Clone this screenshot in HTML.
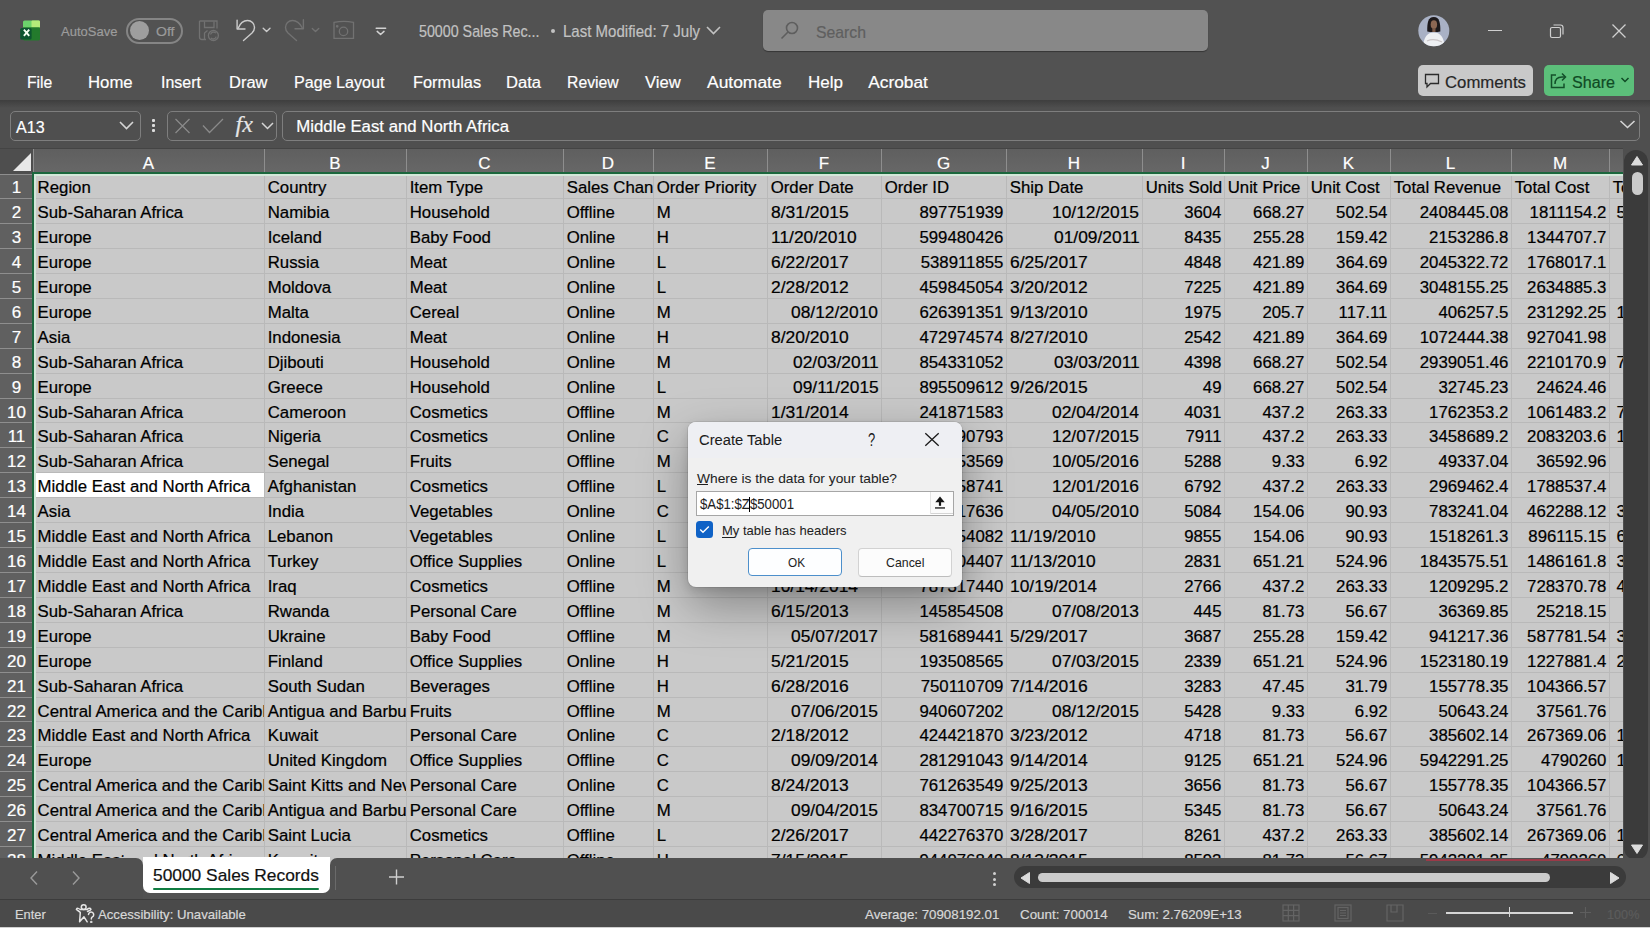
<!DOCTYPE html><html><head><meta charset="utf-8"><style>
html,body{margin:0;padding:0;width:1650px;height:928px;overflow:hidden;background:#525252}
body{position:relative;font-family:"Liberation Sans",sans-serif}
.t{position:absolute;white-space:nowrap;-webkit-text-stroke:0.2px currentColor}
.c .t{-webkit-text-stroke:0.22px #000}
</style></head><body>
<div style="position:absolute;left:0px;top:0px;width:1650px;height:100px;background:#525252"></div>
<div style="position:absolute;left:0px;top:100px;width:1650px;height:8px;background:linear-gradient(#3e3e3e,#4f4f4f)"></div>
<div style="position:absolute;left:0px;top:108px;width:1650px;height:41px;background:#4f4f4f"></div>
<div style="position:absolute;left:33px;top:174px;width:1590px;height:684px;background:#c9c9c9"></div>
<div style="position:absolute;left:35px;top:473px;width:229px;height:24px;background:#ffffff"></div>
<div style="position:absolute;left:264px;top:174px;width:1px;height:684px;background:#b9b9b9"></div>
<div style="position:absolute;left:406px;top:174px;width:1px;height:684px;background:#b9b9b9"></div>
<div style="position:absolute;left:563px;top:174px;width:1px;height:684px;background:#b9b9b9"></div>
<div style="position:absolute;left:653px;top:174px;width:1px;height:684px;background:#b9b9b9"></div>
<div style="position:absolute;left:767px;top:174px;width:1px;height:684px;background:#b9b9b9"></div>
<div style="position:absolute;left:881px;top:174px;width:1px;height:684px;background:#b9b9b9"></div>
<div style="position:absolute;left:1006px;top:174px;width:1px;height:684px;background:#b9b9b9"></div>
<div style="position:absolute;left:1142px;top:174px;width:1px;height:684px;background:#b9b9b9"></div>
<div style="position:absolute;left:1224px;top:174px;width:1px;height:684px;background:#b9b9b9"></div>
<div style="position:absolute;left:1307px;top:174px;width:1px;height:684px;background:#b9b9b9"></div>
<div style="position:absolute;left:1390px;top:174px;width:1px;height:684px;background:#b9b9b9"></div>
<div style="position:absolute;left:1511px;top:174px;width:1px;height:684px;background:#b9b9b9"></div>
<div style="position:absolute;left:1609px;top:174px;width:1px;height:684px;background:#b9b9b9"></div>
<div style="position:absolute;left:33px;top:198px;width:1590px;height:1px;background:#b9b9b9"></div>
<div style="position:absolute;left:33px;top:223px;width:1590px;height:1px;background:#b9b9b9"></div>
<div style="position:absolute;left:33px;top:248px;width:1590px;height:1px;background:#b9b9b9"></div>
<div style="position:absolute;left:33px;top:273px;width:1590px;height:1px;background:#b9b9b9"></div>
<div style="position:absolute;left:33px;top:298px;width:1590px;height:1px;background:#b9b9b9"></div>
<div style="position:absolute;left:33px;top:323px;width:1590px;height:1px;background:#b9b9b9"></div>
<div style="position:absolute;left:33px;top:348px;width:1590px;height:1px;background:#b9b9b9"></div>
<div style="position:absolute;left:33px;top:373px;width:1590px;height:1px;background:#b9b9b9"></div>
<div style="position:absolute;left:33px;top:398px;width:1590px;height:1px;background:#b9b9b9"></div>
<div style="position:absolute;left:33px;top:422px;width:1590px;height:1px;background:#b9b9b9"></div>
<div style="position:absolute;left:33px;top:447px;width:1590px;height:1px;background:#b9b9b9"></div>
<div style="position:absolute;left:33px;top:472px;width:1590px;height:1px;background:#b9b9b9"></div>
<div style="position:absolute;left:33px;top:497px;width:1590px;height:1px;background:#b9b9b9"></div>
<div style="position:absolute;left:33px;top:522px;width:1590px;height:1px;background:#b9b9b9"></div>
<div style="position:absolute;left:33px;top:547px;width:1590px;height:1px;background:#b9b9b9"></div>
<div style="position:absolute;left:33px;top:572px;width:1590px;height:1px;background:#b9b9b9"></div>
<div style="position:absolute;left:33px;top:597px;width:1590px;height:1px;background:#b9b9b9"></div>
<div style="position:absolute;left:33px;top:622px;width:1590px;height:1px;background:#b9b9b9"></div>
<div style="position:absolute;left:33px;top:647px;width:1590px;height:1px;background:#b9b9b9"></div>
<div style="position:absolute;left:33px;top:672px;width:1590px;height:1px;background:#b9b9b9"></div>
<div style="position:absolute;left:33px;top:697px;width:1590px;height:1px;background:#b9b9b9"></div>
<div style="position:absolute;left:33px;top:721px;width:1590px;height:1px;background:#b9b9b9"></div>
<div style="position:absolute;left:33px;top:746px;width:1590px;height:1px;background:#b9b9b9"></div>
<div style="position:absolute;left:33px;top:771px;width:1590px;height:1px;background:#b9b9b9"></div>
<div style="position:absolute;left:33px;top:796px;width:1590px;height:1px;background:#b9b9b9"></div>
<div style="position:absolute;left:33px;top:821px;width:1590px;height:1px;background:#b9b9b9"></div>
<div style="position:absolute;left:33px;top:846px;width:1590px;height:1px;background:#b9b9b9"></div>
<div class="c" style="position:absolute;left:34px;top:174px;width:230px;height:24px;overflow:hidden"><div class="t" style="left:3.60px;top:4.00px;font-size:16.80px;line-height:19px;color:#000;">Region</div></div>
<div class="c" style="position:absolute;left:265px;top:174px;width:141px;height:24px;overflow:hidden"><div class="t" style="left:2.70px;top:4.00px;font-size:16.80px;line-height:19px;color:#000;">Country</div></div>
<div class="c" style="position:absolute;left:407px;top:174px;width:156px;height:24px;overflow:hidden"><div class="t" style="left:2.70px;top:4.00px;font-size:16.80px;line-height:19px;color:#000;">Item Type</div></div>
<div class="c" style="position:absolute;left:564px;top:174px;width:89px;height:24px;overflow:hidden"><div class="t" style="left:2.70px;top:4.00px;font-size:16.80px;line-height:19px;color:#000;">Sales Channel</div></div>
<div class="c" style="position:absolute;left:654px;top:174px;width:113px;height:24px;overflow:hidden"><div class="t" style="left:2.70px;top:4.00px;font-size:16.80px;line-height:19px;color:#000;">Order Priority</div></div>
<div class="c" style="position:absolute;left:768px;top:174px;width:113px;height:24px;overflow:hidden"><div class="t" style="left:2.70px;top:4.00px;font-size:16.80px;line-height:19px;color:#000;">Order Date</div></div>
<div class="c" style="position:absolute;left:882px;top:174px;width:124px;height:24px;overflow:hidden"><div class="t" style="left:2.70px;top:4.00px;font-size:16.80px;line-height:19px;color:#000;">Order ID</div></div>
<div class="c" style="position:absolute;left:1007px;top:174px;width:135px;height:24px;overflow:hidden"><div class="t" style="left:2.70px;top:4.00px;font-size:16.80px;line-height:19px;color:#000;">Ship Date</div></div>
<div class="c" style="position:absolute;left:1143px;top:174px;width:81px;height:24px;overflow:hidden"><div class="t" style="left:2.70px;top:4.00px;font-size:16.80px;line-height:19px;color:#000;">Units Sold</div></div>
<div class="c" style="position:absolute;left:1225px;top:174px;width:82px;height:24px;overflow:hidden"><div class="t" style="left:2.70px;top:4.00px;font-size:16.80px;line-height:19px;color:#000;">Unit Price</div></div>
<div class="c" style="position:absolute;left:1308px;top:174px;width:82px;height:24px;overflow:hidden"><div class="t" style="left:2.70px;top:4.00px;font-size:16.80px;line-height:19px;color:#000;">Unit Cost</div></div>
<div class="c" style="position:absolute;left:1391px;top:174px;width:120px;height:24px;overflow:hidden"><div class="t" style="left:2.70px;top:4.00px;font-size:16.80px;line-height:19px;color:#000;">Total Revenue</div></div>
<div class="c" style="position:absolute;left:1512px;top:174px;width:97px;height:24px;overflow:hidden"><div class="t" style="left:2.70px;top:4.00px;font-size:16.80px;line-height:19px;color:#000;">Total Cost</div></div>
<div class="c" style="position:absolute;left:1610px;top:174px;width:13px;height:24px;overflow:hidden"><div class="t" style="left:2.70px;top:4.00px;font-size:16.80px;line-height:19px;color:#000;">Total Profit</div></div>
<div class="c" style="position:absolute;left:34px;top:199px;width:230px;height:24px;overflow:hidden"><div class="t" style="left:3.60px;top:4.00px;font-size:16.80px;line-height:19px;color:#000;">Sub-Saharan Africa</div></div>
<div class="c" style="position:absolute;left:265px;top:199px;width:141px;height:24px;overflow:hidden"><div class="t" style="left:2.70px;top:4.00px;font-size:16.80px;line-height:19px;color:#000;">Namibia</div></div>
<div class="c" style="position:absolute;left:407px;top:199px;width:156px;height:24px;overflow:hidden"><div class="t" style="left:2.70px;top:4.00px;font-size:16.80px;line-height:19px;color:#000;">Household</div></div>
<div class="c" style="position:absolute;left:564px;top:199px;width:89px;height:24px;overflow:hidden"><div class="t" style="left:2.70px;top:4.00px;font-size:16.80px;line-height:19px;color:#000;">Offline</div></div>
<div class="c" style="position:absolute;left:654px;top:199px;width:113px;height:24px;overflow:hidden"><div class="t" style="left:2.70px;top:4.00px;font-size:16.80px;line-height:19px;color:#000;">M</div></div>
<div class="c" style="position:absolute;left:768px;top:199px;width:113px;height:24px;overflow:hidden"><div class="t" style="left:2.70px;top:4.00px;font-size:16.80px;line-height:19px;color:#000;transform:scaleX(1.0401);transform-origin:0 0;">8/31/2015</div></div>
<div class="c" style="position:absolute;left:882px;top:199px;width:124px;height:24px;overflow:hidden"><div class="t" style="left:37.42px;top:4.00px;font-size:16.80px;line-height:19px;color:#000;">897751939</div></div>
<div class="c" style="position:absolute;left:1007px;top:199px;width:135px;height:24px;overflow:hidden"><div class="t" style="left:45.43px;top:4.00px;font-size:16.80px;line-height:19px;color:#000;transform:scaleX(1.0357);transform-origin:0 0;">10/12/2015</div></div>
<div class="c" style="position:absolute;left:1143px;top:199px;width:81px;height:24px;overflow:hidden"><div class="t" style="left:41.13px;top:4.00px;font-size:16.80px;line-height:19px;color:#000;">3604</div></div>
<div class="c" style="position:absolute;left:1225px;top:199px;width:82px;height:24px;overflow:hidden"><div class="t" style="left:28.12px;top:4.00px;font-size:16.80px;line-height:19px;color:#000;">668.27</div></div>
<div class="c" style="position:absolute;left:1308px;top:199px;width:82px;height:24px;overflow:hidden"><div class="t" style="left:28.12px;top:4.00px;font-size:16.80px;line-height:19px;color:#000;">502.54</div></div>
<div class="c" style="position:absolute;left:1391px;top:199px;width:120px;height:24px;overflow:hidden"><div class="t" style="left:28.75px;top:4.00px;font-size:16.80px;line-height:19px;color:#000;">2408445.08</div></div>
<div class="c" style="position:absolute;left:1512px;top:199px;width:97px;height:24px;overflow:hidden"><div class="t" style="left:17.59px;top:4.00px;font-size:16.80px;line-height:19px;color:#000;">1811154.2</div></div>
<div class="c" style="position:absolute;left:1610px;top:199px;width:13px;height:24px;overflow:hidden"><div class="t" style="left:6.50px;top:4.00px;font-size:16.80px;line-height:19px;color:#000;">5</div></div>
<div class="c" style="position:absolute;left:34px;top:224px;width:230px;height:24px;overflow:hidden"><div class="t" style="left:3.60px;top:4.00px;font-size:16.80px;line-height:19px;color:#000;">Europe</div></div>
<div class="c" style="position:absolute;left:265px;top:224px;width:141px;height:24px;overflow:hidden"><div class="t" style="left:2.70px;top:4.00px;font-size:16.80px;line-height:19px;color:#000;">Iceland</div></div>
<div class="c" style="position:absolute;left:407px;top:224px;width:156px;height:24px;overflow:hidden"><div class="t" style="left:2.70px;top:4.00px;font-size:16.80px;line-height:19px;color:#000;">Baby Food</div></div>
<div class="c" style="position:absolute;left:564px;top:224px;width:89px;height:24px;overflow:hidden"><div class="t" style="left:2.70px;top:4.00px;font-size:16.80px;line-height:19px;color:#000;">Online</div></div>
<div class="c" style="position:absolute;left:654px;top:224px;width:113px;height:24px;overflow:hidden"><div class="t" style="left:2.70px;top:4.00px;font-size:16.80px;line-height:19px;color:#000;">H</div></div>
<div class="c" style="position:absolute;left:768px;top:224px;width:113px;height:24px;overflow:hidden"><div class="t" style="left:2.70px;top:4.00px;font-size:16.80px;line-height:19px;color:#000;transform:scaleX(1.0362);transform-origin:0 0;">11/20/2010</div></div>
<div class="c" style="position:absolute;left:882px;top:224px;width:124px;height:24px;overflow:hidden"><div class="t" style="left:37.42px;top:4.00px;font-size:16.80px;line-height:19px;color:#000;">599480426</div></div>
<div class="c" style="position:absolute;left:1007px;top:224px;width:135px;height:24px;overflow:hidden"><div class="t" style="left:46.67px;top:4.00px;font-size:16.80px;line-height:19px;color:#000;transform:scaleX(1.0362);transform-origin:0 0;">01/09/2011</div></div>
<div class="c" style="position:absolute;left:1143px;top:224px;width:81px;height:24px;overflow:hidden"><div class="t" style="left:41.13px;top:4.00px;font-size:16.80px;line-height:19px;color:#000;">8435</div></div>
<div class="c" style="position:absolute;left:1225px;top:224px;width:82px;height:24px;overflow:hidden"><div class="t" style="left:28.12px;top:4.00px;font-size:16.80px;line-height:19px;color:#000;">255.28</div></div>
<div class="c" style="position:absolute;left:1308px;top:224px;width:82px;height:24px;overflow:hidden"><div class="t" style="left:28.12px;top:4.00px;font-size:16.80px;line-height:19px;color:#000;">159.42</div></div>
<div class="c" style="position:absolute;left:1391px;top:224px;width:120px;height:24px;overflow:hidden"><div class="t" style="left:38.09px;top:4.00px;font-size:16.80px;line-height:19px;color:#000;">2153286.8</div></div>
<div class="c" style="position:absolute;left:1512px;top:224px;width:97px;height:24px;overflow:hidden"><div class="t" style="left:15.09px;top:4.00px;font-size:16.80px;line-height:19px;color:#000;">1344707.7</div></div>
<div class="c" style="position:absolute;left:34px;top:249px;width:230px;height:24px;overflow:hidden"><div class="t" style="left:3.60px;top:4.00px;font-size:16.80px;line-height:19px;color:#000;">Europe</div></div>
<div class="c" style="position:absolute;left:265px;top:249px;width:141px;height:24px;overflow:hidden"><div class="t" style="left:2.70px;top:4.00px;font-size:16.80px;line-height:19px;color:#000;">Russia</div></div>
<div class="c" style="position:absolute;left:407px;top:249px;width:156px;height:24px;overflow:hidden"><div class="t" style="left:2.70px;top:4.00px;font-size:16.80px;line-height:19px;color:#000;">Meat</div></div>
<div class="c" style="position:absolute;left:564px;top:249px;width:89px;height:24px;overflow:hidden"><div class="t" style="left:2.70px;top:4.00px;font-size:16.80px;line-height:19px;color:#000;">Online</div></div>
<div class="c" style="position:absolute;left:654px;top:249px;width:113px;height:24px;overflow:hidden"><div class="t" style="left:2.70px;top:4.00px;font-size:16.80px;line-height:19px;color:#000;">L</div></div>
<div class="c" style="position:absolute;left:768px;top:249px;width:113px;height:24px;overflow:hidden"><div class="t" style="left:2.70px;top:4.00px;font-size:16.80px;line-height:19px;color:#000;transform:scaleX(1.0401);transform-origin:0 0;">6/22/2017</div></div>
<div class="c" style="position:absolute;left:882px;top:249px;width:124px;height:24px;overflow:hidden"><div class="t" style="left:38.67px;top:4.00px;font-size:16.80px;line-height:19px;color:#000;">538911855</div></div>
<div class="c" style="position:absolute;left:1007px;top:249px;width:135px;height:24px;overflow:hidden"><div class="t" style="left:2.70px;top:4.00px;font-size:16.80px;line-height:19px;color:#000;transform:scaleX(1.0401);transform-origin:0 0;">6/25/2017</div></div>
<div class="c" style="position:absolute;left:1143px;top:249px;width:81px;height:24px;overflow:hidden"><div class="t" style="left:41.13px;top:4.00px;font-size:16.80px;line-height:19px;color:#000;">4848</div></div>
<div class="c" style="position:absolute;left:1225px;top:249px;width:82px;height:24px;overflow:hidden"><div class="t" style="left:28.12px;top:4.00px;font-size:16.80px;line-height:19px;color:#000;">421.89</div></div>
<div class="c" style="position:absolute;left:1308px;top:249px;width:82px;height:24px;overflow:hidden"><div class="t" style="left:28.12px;top:4.00px;font-size:16.80px;line-height:19px;color:#000;">364.69</div></div>
<div class="c" style="position:absolute;left:1391px;top:249px;width:120px;height:24px;overflow:hidden"><div class="t" style="left:28.75px;top:4.00px;font-size:16.80px;line-height:19px;color:#000;">2045322.72</div></div>
<div class="c" style="position:absolute;left:1512px;top:249px;width:97px;height:24px;overflow:hidden"><div class="t" style="left:15.09px;top:4.00px;font-size:16.80px;line-height:19px;color:#000;">1768017.1</div></div>
<div class="c" style="position:absolute;left:34px;top:274px;width:230px;height:24px;overflow:hidden"><div class="t" style="left:3.60px;top:4.00px;font-size:16.80px;line-height:19px;color:#000;">Europe</div></div>
<div class="c" style="position:absolute;left:265px;top:274px;width:141px;height:24px;overflow:hidden"><div class="t" style="left:2.70px;top:4.00px;font-size:16.80px;line-height:19px;color:#000;">Moldova</div></div>
<div class="c" style="position:absolute;left:407px;top:274px;width:156px;height:24px;overflow:hidden"><div class="t" style="left:2.70px;top:4.00px;font-size:16.80px;line-height:19px;color:#000;">Meat</div></div>
<div class="c" style="position:absolute;left:564px;top:274px;width:89px;height:24px;overflow:hidden"><div class="t" style="left:2.70px;top:4.00px;font-size:16.80px;line-height:19px;color:#000;">Online</div></div>
<div class="c" style="position:absolute;left:654px;top:274px;width:113px;height:24px;overflow:hidden"><div class="t" style="left:2.70px;top:4.00px;font-size:16.80px;line-height:19px;color:#000;">L</div></div>
<div class="c" style="position:absolute;left:768px;top:274px;width:113px;height:24px;overflow:hidden"><div class="t" style="left:2.70px;top:4.00px;font-size:16.80px;line-height:19px;color:#000;transform:scaleX(1.0401);transform-origin:0 0;">2/28/2012</div></div>
<div class="c" style="position:absolute;left:882px;top:274px;width:124px;height:24px;overflow:hidden"><div class="t" style="left:37.42px;top:4.00px;font-size:16.80px;line-height:19px;color:#000;">459845054</div></div>
<div class="c" style="position:absolute;left:1007px;top:274px;width:135px;height:24px;overflow:hidden"><div class="t" style="left:2.70px;top:4.00px;font-size:16.80px;line-height:19px;color:#000;transform:scaleX(1.0401);transform-origin:0 0;">3/20/2012</div></div>
<div class="c" style="position:absolute;left:1143px;top:274px;width:81px;height:24px;overflow:hidden"><div class="t" style="left:41.13px;top:4.00px;font-size:16.80px;line-height:19px;color:#000;">7225</div></div>
<div class="c" style="position:absolute;left:1225px;top:274px;width:82px;height:24px;overflow:hidden"><div class="t" style="left:28.12px;top:4.00px;font-size:16.80px;line-height:19px;color:#000;">421.89</div></div>
<div class="c" style="position:absolute;left:1308px;top:274px;width:82px;height:24px;overflow:hidden"><div class="t" style="left:28.12px;top:4.00px;font-size:16.80px;line-height:19px;color:#000;">364.69</div></div>
<div class="c" style="position:absolute;left:1391px;top:274px;width:120px;height:24px;overflow:hidden"><div class="t" style="left:28.75px;top:4.00px;font-size:16.80px;line-height:19px;color:#000;">3048155.25</div></div>
<div class="c" style="position:absolute;left:1512px;top:274px;width:97px;height:24px;overflow:hidden"><div class="t" style="left:15.09px;top:4.00px;font-size:16.80px;line-height:19px;color:#000;">2634885.3</div></div>
<div class="c" style="position:absolute;left:34px;top:299px;width:230px;height:24px;overflow:hidden"><div class="t" style="left:3.60px;top:4.00px;font-size:16.80px;line-height:19px;color:#000;">Europe</div></div>
<div class="c" style="position:absolute;left:265px;top:299px;width:141px;height:24px;overflow:hidden"><div class="t" style="left:2.70px;top:4.00px;font-size:16.80px;line-height:19px;color:#000;">Malta</div></div>
<div class="c" style="position:absolute;left:407px;top:299px;width:156px;height:24px;overflow:hidden"><div class="t" style="left:2.70px;top:4.00px;font-size:16.80px;line-height:19px;color:#000;">Cereal</div></div>
<div class="c" style="position:absolute;left:564px;top:299px;width:89px;height:24px;overflow:hidden"><div class="t" style="left:2.70px;top:4.00px;font-size:16.80px;line-height:19px;color:#000;">Online</div></div>
<div class="c" style="position:absolute;left:654px;top:299px;width:113px;height:24px;overflow:hidden"><div class="t" style="left:2.70px;top:4.00px;font-size:16.80px;line-height:19px;color:#000;">M</div></div>
<div class="c" style="position:absolute;left:768px;top:299px;width:113px;height:24px;overflow:hidden"><div class="t" style="left:23.43px;top:4.00px;font-size:16.80px;line-height:19px;color:#000;transform:scaleX(1.0357);transform-origin:0 0;">08/12/2010</div></div>
<div class="c" style="position:absolute;left:882px;top:299px;width:124px;height:24px;overflow:hidden"><div class="t" style="left:37.42px;top:4.00px;font-size:16.80px;line-height:19px;color:#000;">626391351</div></div>
<div class="c" style="position:absolute;left:1007px;top:299px;width:135px;height:24px;overflow:hidden"><div class="t" style="left:2.70px;top:4.00px;font-size:16.80px;line-height:19px;color:#000;transform:scaleX(1.0401);transform-origin:0 0;">9/13/2010</div></div>
<div class="c" style="position:absolute;left:1143px;top:299px;width:81px;height:24px;overflow:hidden"><div class="t" style="left:41.13px;top:4.00px;font-size:16.80px;line-height:19px;color:#000;">1975</div></div>
<div class="c" style="position:absolute;left:1225px;top:299px;width:82px;height:24px;overflow:hidden"><div class="t" style="left:37.46px;top:4.00px;font-size:16.80px;line-height:19px;color:#000;">205.7</div></div>
<div class="c" style="position:absolute;left:1308px;top:299px;width:82px;height:24px;overflow:hidden"><div class="t" style="left:30.61px;top:4.00px;font-size:16.80px;line-height:19px;color:#000;">117.11</div></div>
<div class="c" style="position:absolute;left:1391px;top:299px;width:120px;height:24px;overflow:hidden"><div class="t" style="left:47.44px;top:4.00px;font-size:16.80px;line-height:19px;color:#000;">406257.5</div></div>
<div class="c" style="position:absolute;left:1512px;top:299px;width:97px;height:24px;overflow:hidden"><div class="t" style="left:15.09px;top:4.00px;font-size:16.80px;line-height:19px;color:#000;">231292.25</div></div>
<div class="c" style="position:absolute;left:1610px;top:299px;width:13px;height:24px;overflow:hidden"><div class="t" style="left:6.50px;top:4.00px;font-size:16.80px;line-height:19px;color:#000;">1</div></div>
<div class="c" style="position:absolute;left:34px;top:324px;width:230px;height:24px;overflow:hidden"><div class="t" style="left:3.60px;top:4.00px;font-size:16.80px;line-height:19px;color:#000;">Asia</div></div>
<div class="c" style="position:absolute;left:265px;top:324px;width:141px;height:24px;overflow:hidden"><div class="t" style="left:2.70px;top:4.00px;font-size:16.80px;line-height:19px;color:#000;">Indonesia</div></div>
<div class="c" style="position:absolute;left:407px;top:324px;width:156px;height:24px;overflow:hidden"><div class="t" style="left:2.70px;top:4.00px;font-size:16.80px;line-height:19px;color:#000;">Meat</div></div>
<div class="c" style="position:absolute;left:564px;top:324px;width:89px;height:24px;overflow:hidden"><div class="t" style="left:2.70px;top:4.00px;font-size:16.80px;line-height:19px;color:#000;">Online</div></div>
<div class="c" style="position:absolute;left:654px;top:324px;width:113px;height:24px;overflow:hidden"><div class="t" style="left:2.70px;top:4.00px;font-size:16.80px;line-height:19px;color:#000;">H</div></div>
<div class="c" style="position:absolute;left:768px;top:324px;width:113px;height:24px;overflow:hidden"><div class="t" style="left:2.70px;top:4.00px;font-size:16.80px;line-height:19px;color:#000;transform:scaleX(1.0401);transform-origin:0 0;">8/20/2010</div></div>
<div class="c" style="position:absolute;left:882px;top:324px;width:124px;height:24px;overflow:hidden"><div class="t" style="left:37.42px;top:4.00px;font-size:16.80px;line-height:19px;color:#000;">472974574</div></div>
<div class="c" style="position:absolute;left:1007px;top:324px;width:135px;height:24px;overflow:hidden"><div class="t" style="left:2.70px;top:4.00px;font-size:16.80px;line-height:19px;color:#000;transform:scaleX(1.0401);transform-origin:0 0;">8/27/2010</div></div>
<div class="c" style="position:absolute;left:1143px;top:324px;width:81px;height:24px;overflow:hidden"><div class="t" style="left:41.13px;top:4.00px;font-size:16.80px;line-height:19px;color:#000;">2542</div></div>
<div class="c" style="position:absolute;left:1225px;top:324px;width:82px;height:24px;overflow:hidden"><div class="t" style="left:28.12px;top:4.00px;font-size:16.80px;line-height:19px;color:#000;">421.89</div></div>
<div class="c" style="position:absolute;left:1308px;top:324px;width:82px;height:24px;overflow:hidden"><div class="t" style="left:28.12px;top:4.00px;font-size:16.80px;line-height:19px;color:#000;">364.69</div></div>
<div class="c" style="position:absolute;left:1391px;top:324px;width:120px;height:24px;overflow:hidden"><div class="t" style="left:28.75px;top:4.00px;font-size:16.80px;line-height:19px;color:#000;">1072444.38</div></div>
<div class="c" style="position:absolute;left:1512px;top:324px;width:97px;height:24px;overflow:hidden"><div class="t" style="left:15.09px;top:4.00px;font-size:16.80px;line-height:19px;color:#000;">927041.98</div></div>
<div class="c" style="position:absolute;left:34px;top:349px;width:230px;height:24px;overflow:hidden"><div class="t" style="left:3.60px;top:4.00px;font-size:16.80px;line-height:19px;color:#000;">Sub-Saharan Africa</div></div>
<div class="c" style="position:absolute;left:265px;top:349px;width:141px;height:24px;overflow:hidden"><div class="t" style="left:2.70px;top:4.00px;font-size:16.80px;line-height:19px;color:#000;">Djibouti</div></div>
<div class="c" style="position:absolute;left:407px;top:349px;width:156px;height:24px;overflow:hidden"><div class="t" style="left:2.70px;top:4.00px;font-size:16.80px;line-height:19px;color:#000;">Household</div></div>
<div class="c" style="position:absolute;left:564px;top:349px;width:89px;height:24px;overflow:hidden"><div class="t" style="left:2.70px;top:4.00px;font-size:16.80px;line-height:19px;color:#000;">Online</div></div>
<div class="c" style="position:absolute;left:654px;top:349px;width:113px;height:24px;overflow:hidden"><div class="t" style="left:2.70px;top:4.00px;font-size:16.80px;line-height:19px;color:#000;">M</div></div>
<div class="c" style="position:absolute;left:768px;top:349px;width:113px;height:24px;overflow:hidden"><div class="t" style="left:24.67px;top:4.00px;font-size:16.80px;line-height:19px;color:#000;transform:scaleX(1.0362);transform-origin:0 0;">02/03/2011</div></div>
<div class="c" style="position:absolute;left:882px;top:349px;width:124px;height:24px;overflow:hidden"><div class="t" style="left:37.42px;top:4.00px;font-size:16.80px;line-height:19px;color:#000;">854331052</div></div>
<div class="c" style="position:absolute;left:1007px;top:349px;width:135px;height:24px;overflow:hidden"><div class="t" style="left:46.67px;top:4.00px;font-size:16.80px;line-height:19px;color:#000;transform:scaleX(1.0362);transform-origin:0 0;">03/03/2011</div></div>
<div class="c" style="position:absolute;left:1143px;top:349px;width:81px;height:24px;overflow:hidden"><div class="t" style="left:41.13px;top:4.00px;font-size:16.80px;line-height:19px;color:#000;">4398</div></div>
<div class="c" style="position:absolute;left:1225px;top:349px;width:82px;height:24px;overflow:hidden"><div class="t" style="left:28.12px;top:4.00px;font-size:16.80px;line-height:19px;color:#000;">668.27</div></div>
<div class="c" style="position:absolute;left:1308px;top:349px;width:82px;height:24px;overflow:hidden"><div class="t" style="left:28.12px;top:4.00px;font-size:16.80px;line-height:19px;color:#000;">502.54</div></div>
<div class="c" style="position:absolute;left:1391px;top:349px;width:120px;height:24px;overflow:hidden"><div class="t" style="left:28.75px;top:4.00px;font-size:16.80px;line-height:19px;color:#000;">2939051.46</div></div>
<div class="c" style="position:absolute;left:1512px;top:349px;width:97px;height:24px;overflow:hidden"><div class="t" style="left:15.09px;top:4.00px;font-size:16.80px;line-height:19px;color:#000;">2210170.9</div></div>
<div class="c" style="position:absolute;left:1610px;top:349px;width:13px;height:24px;overflow:hidden"><div class="t" style="left:6.50px;top:4.00px;font-size:16.80px;line-height:19px;color:#000;">7</div></div>
<div class="c" style="position:absolute;left:34px;top:374px;width:230px;height:24px;overflow:hidden"><div class="t" style="left:3.60px;top:4.00px;font-size:16.80px;line-height:19px;color:#000;">Europe</div></div>
<div class="c" style="position:absolute;left:265px;top:374px;width:141px;height:24px;overflow:hidden"><div class="t" style="left:2.70px;top:4.00px;font-size:16.80px;line-height:19px;color:#000;">Greece</div></div>
<div class="c" style="position:absolute;left:407px;top:374px;width:156px;height:24px;overflow:hidden"><div class="t" style="left:2.70px;top:4.00px;font-size:16.80px;line-height:19px;color:#000;">Household</div></div>
<div class="c" style="position:absolute;left:564px;top:374px;width:89px;height:24px;overflow:hidden"><div class="t" style="left:2.70px;top:4.00px;font-size:16.80px;line-height:19px;color:#000;">Online</div></div>
<div class="c" style="position:absolute;left:654px;top:374px;width:113px;height:24px;overflow:hidden"><div class="t" style="left:2.70px;top:4.00px;font-size:16.80px;line-height:19px;color:#000;">L</div></div>
<div class="c" style="position:absolute;left:768px;top:374px;width:113px;height:24px;overflow:hidden"><div class="t" style="left:24.67px;top:4.00px;font-size:16.80px;line-height:19px;color:#000;transform:scaleX(1.0362);transform-origin:0 0;">09/11/2015</div></div>
<div class="c" style="position:absolute;left:882px;top:374px;width:124px;height:24px;overflow:hidden"><div class="t" style="left:37.42px;top:4.00px;font-size:16.80px;line-height:19px;color:#000;">895509612</div></div>
<div class="c" style="position:absolute;left:1007px;top:374px;width:135px;height:24px;overflow:hidden"><div class="t" style="left:2.70px;top:4.00px;font-size:16.80px;line-height:19px;color:#000;transform:scaleX(1.0401);transform-origin:0 0;">9/26/2015</div></div>
<div class="c" style="position:absolute;left:1143px;top:374px;width:81px;height:24px;overflow:hidden"><div class="t" style="left:59.82px;top:4.00px;font-size:16.80px;line-height:19px;color:#000;">49</div></div>
<div class="c" style="position:absolute;left:1225px;top:374px;width:82px;height:24px;overflow:hidden"><div class="t" style="left:28.12px;top:4.00px;font-size:16.80px;line-height:19px;color:#000;">668.27</div></div>
<div class="c" style="position:absolute;left:1308px;top:374px;width:82px;height:24px;overflow:hidden"><div class="t" style="left:28.12px;top:4.00px;font-size:16.80px;line-height:19px;color:#000;">502.54</div></div>
<div class="c" style="position:absolute;left:1391px;top:374px;width:120px;height:24px;overflow:hidden"><div class="t" style="left:47.44px;top:4.00px;font-size:16.80px;line-height:19px;color:#000;">32745.23</div></div>
<div class="c" style="position:absolute;left:1512px;top:374px;width:97px;height:24px;overflow:hidden"><div class="t" style="left:24.44px;top:4.00px;font-size:16.80px;line-height:19px;color:#000;">24624.46</div></div>
<div class="c" style="position:absolute;left:34px;top:399px;width:230px;height:23px;overflow:hidden"><div class="t" style="left:3.60px;top:4.00px;font-size:16.80px;line-height:19px;color:#000;">Sub-Saharan Africa</div></div>
<div class="c" style="position:absolute;left:265px;top:399px;width:141px;height:23px;overflow:hidden"><div class="t" style="left:2.70px;top:4.00px;font-size:16.80px;line-height:19px;color:#000;">Cameroon</div></div>
<div class="c" style="position:absolute;left:407px;top:399px;width:156px;height:23px;overflow:hidden"><div class="t" style="left:2.70px;top:4.00px;font-size:16.80px;line-height:19px;color:#000;">Cosmetics</div></div>
<div class="c" style="position:absolute;left:564px;top:399px;width:89px;height:23px;overflow:hidden"><div class="t" style="left:2.70px;top:4.00px;font-size:16.80px;line-height:19px;color:#000;">Offline</div></div>
<div class="c" style="position:absolute;left:654px;top:399px;width:113px;height:23px;overflow:hidden"><div class="t" style="left:2.70px;top:4.00px;font-size:16.80px;line-height:19px;color:#000;">M</div></div>
<div class="c" style="position:absolute;left:768px;top:399px;width:113px;height:23px;overflow:hidden"><div class="t" style="left:2.70px;top:4.00px;font-size:16.80px;line-height:19px;color:#000;transform:scaleX(1.0401);transform-origin:0 0;">1/31/2014</div></div>
<div class="c" style="position:absolute;left:882px;top:399px;width:124px;height:23px;overflow:hidden"><div class="t" style="left:37.42px;top:4.00px;font-size:16.80px;line-height:19px;color:#000;">241871583</div></div>
<div class="c" style="position:absolute;left:1007px;top:399px;width:135px;height:23px;overflow:hidden"><div class="t" style="left:45.43px;top:4.00px;font-size:16.80px;line-height:19px;color:#000;transform:scaleX(1.0357);transform-origin:0 0;">02/04/2014</div></div>
<div class="c" style="position:absolute;left:1143px;top:399px;width:81px;height:23px;overflow:hidden"><div class="t" style="left:41.13px;top:4.00px;font-size:16.80px;line-height:19px;color:#000;">4031</div></div>
<div class="c" style="position:absolute;left:1225px;top:399px;width:82px;height:23px;overflow:hidden"><div class="t" style="left:37.46px;top:4.00px;font-size:16.80px;line-height:19px;color:#000;">437.2</div></div>
<div class="c" style="position:absolute;left:1308px;top:399px;width:82px;height:23px;overflow:hidden"><div class="t" style="left:28.12px;top:4.00px;font-size:16.80px;line-height:19px;color:#000;">263.33</div></div>
<div class="c" style="position:absolute;left:1391px;top:399px;width:120px;height:23px;overflow:hidden"><div class="t" style="left:38.09px;top:4.00px;font-size:16.80px;line-height:19px;color:#000;">1762353.2</div></div>
<div class="c" style="position:absolute;left:1512px;top:399px;width:97px;height:23px;overflow:hidden"><div class="t" style="left:15.09px;top:4.00px;font-size:16.80px;line-height:19px;color:#000;">1061483.2</div></div>
<div class="c" style="position:absolute;left:1610px;top:399px;width:13px;height:23px;overflow:hidden"><div class="t" style="left:6.50px;top:4.00px;font-size:16.80px;line-height:19px;color:#000;">7</div></div>
<div class="c" style="position:absolute;left:34px;top:423px;width:230px;height:24px;overflow:hidden"><div class="t" style="left:3.60px;top:4.00px;font-size:16.80px;line-height:19px;color:#000;">Sub-Saharan Africa</div></div>
<div class="c" style="position:absolute;left:265px;top:423px;width:141px;height:24px;overflow:hidden"><div class="t" style="left:2.70px;top:4.00px;font-size:16.80px;line-height:19px;color:#000;">Nigeria</div></div>
<div class="c" style="position:absolute;left:407px;top:423px;width:156px;height:24px;overflow:hidden"><div class="t" style="left:2.70px;top:4.00px;font-size:16.80px;line-height:19px;color:#000;">Cosmetics</div></div>
<div class="c" style="position:absolute;left:564px;top:423px;width:89px;height:24px;overflow:hidden"><div class="t" style="left:2.70px;top:4.00px;font-size:16.80px;line-height:19px;color:#000;">Online</div></div>
<div class="c" style="position:absolute;left:654px;top:423px;width:113px;height:24px;overflow:hidden"><div class="t" style="left:2.70px;top:4.00px;font-size:16.80px;line-height:19px;color:#000;">C</div></div>
<div class="c" style="position:absolute;left:768px;top:423px;width:113px;height:24px;overflow:hidden"><div class="t" style="left:2.70px;top:4.00px;font-size:16.80px;line-height:19px;color:#000;transform:scaleX(1.0362);transform-origin:0 0;">11/26/2015</div></div>
<div class="c" style="position:absolute;left:882px;top:423px;width:124px;height:24px;overflow:hidden"><div class="t" style="left:37.42px;top:4.00px;font-size:16.80px;line-height:19px;color:#000;">423690793</div></div>
<div class="c" style="position:absolute;left:1007px;top:423px;width:135px;height:24px;overflow:hidden"><div class="t" style="left:45.43px;top:4.00px;font-size:16.80px;line-height:19px;color:#000;transform:scaleX(1.0357);transform-origin:0 0;">12/07/2015</div></div>
<div class="c" style="position:absolute;left:1143px;top:423px;width:81px;height:24px;overflow:hidden"><div class="t" style="left:42.38px;top:4.00px;font-size:16.80px;line-height:19px;color:#000;">7911</div></div>
<div class="c" style="position:absolute;left:1225px;top:423px;width:82px;height:24px;overflow:hidden"><div class="t" style="left:37.46px;top:4.00px;font-size:16.80px;line-height:19px;color:#000;">437.2</div></div>
<div class="c" style="position:absolute;left:1308px;top:423px;width:82px;height:24px;overflow:hidden"><div class="t" style="left:28.12px;top:4.00px;font-size:16.80px;line-height:19px;color:#000;">263.33</div></div>
<div class="c" style="position:absolute;left:1391px;top:423px;width:120px;height:24px;overflow:hidden"><div class="t" style="left:38.09px;top:4.00px;font-size:16.80px;line-height:19px;color:#000;">3458689.2</div></div>
<div class="c" style="position:absolute;left:1512px;top:423px;width:97px;height:24px;overflow:hidden"><div class="t" style="left:15.09px;top:4.00px;font-size:16.80px;line-height:19px;color:#000;">2083203.6</div></div>
<div class="c" style="position:absolute;left:1610px;top:423px;width:13px;height:24px;overflow:hidden"><div class="t" style="left:6.50px;top:4.00px;font-size:16.80px;line-height:19px;color:#000;">1</div></div>
<div class="c" style="position:absolute;left:34px;top:448px;width:230px;height:24px;overflow:hidden"><div class="t" style="left:3.60px;top:4.00px;font-size:16.80px;line-height:19px;color:#000;">Sub-Saharan Africa</div></div>
<div class="c" style="position:absolute;left:265px;top:448px;width:141px;height:24px;overflow:hidden"><div class="t" style="left:2.70px;top:4.00px;font-size:16.80px;line-height:19px;color:#000;">Senegal</div></div>
<div class="c" style="position:absolute;left:407px;top:448px;width:156px;height:24px;overflow:hidden"><div class="t" style="left:2.70px;top:4.00px;font-size:16.80px;line-height:19px;color:#000;">Fruits</div></div>
<div class="c" style="position:absolute;left:564px;top:448px;width:89px;height:24px;overflow:hidden"><div class="t" style="left:2.70px;top:4.00px;font-size:16.80px;line-height:19px;color:#000;">Offline</div></div>
<div class="c" style="position:absolute;left:654px;top:448px;width:113px;height:24px;overflow:hidden"><div class="t" style="left:2.70px;top:4.00px;font-size:16.80px;line-height:19px;color:#000;">M</div></div>
<div class="c" style="position:absolute;left:768px;top:448px;width:113px;height:24px;overflow:hidden"><div class="t" style="left:2.70px;top:4.00px;font-size:16.80px;line-height:19px;color:#000;transform:scaleX(1.0401);transform-origin:0 0;">9/16/2016</div></div>
<div class="c" style="position:absolute;left:882px;top:448px;width:124px;height:24px;overflow:hidden"><div class="t" style="left:37.42px;top:4.00px;font-size:16.80px;line-height:19px;color:#000;">176353569</div></div>
<div class="c" style="position:absolute;left:1007px;top:448px;width:135px;height:24px;overflow:hidden"><div class="t" style="left:45.43px;top:4.00px;font-size:16.80px;line-height:19px;color:#000;transform:scaleX(1.0357);transform-origin:0 0;">10/05/2016</div></div>
<div class="c" style="position:absolute;left:1143px;top:448px;width:81px;height:24px;overflow:hidden"><div class="t" style="left:41.13px;top:4.00px;font-size:16.80px;line-height:19px;color:#000;">5288</div></div>
<div class="c" style="position:absolute;left:1225px;top:448px;width:82px;height:24px;overflow:hidden"><div class="t" style="left:46.81px;top:4.00px;font-size:16.80px;line-height:19px;color:#000;">9.33</div></div>
<div class="c" style="position:absolute;left:1308px;top:448px;width:82px;height:24px;overflow:hidden"><div class="t" style="left:46.81px;top:4.00px;font-size:16.80px;line-height:19px;color:#000;">6.92</div></div>
<div class="c" style="position:absolute;left:1391px;top:448px;width:120px;height:24px;overflow:hidden"><div class="t" style="left:47.44px;top:4.00px;font-size:16.80px;line-height:19px;color:#000;">49337.04</div></div>
<div class="c" style="position:absolute;left:1512px;top:448px;width:97px;height:24px;overflow:hidden"><div class="t" style="left:24.44px;top:4.00px;font-size:16.80px;line-height:19px;color:#000;">36592.96</div></div>
<div class="c" style="position:absolute;left:34px;top:473px;width:230px;height:24px;overflow:hidden"><div class="t" style="left:3.60px;top:4.00px;font-size:16.80px;line-height:19px;color:#000;">Middle East and North Africa</div></div>
<div class="c" style="position:absolute;left:265px;top:473px;width:141px;height:24px;overflow:hidden"><div class="t" style="left:2.70px;top:4.00px;font-size:16.80px;line-height:19px;color:#000;">Afghanistan</div></div>
<div class="c" style="position:absolute;left:407px;top:473px;width:156px;height:24px;overflow:hidden"><div class="t" style="left:2.70px;top:4.00px;font-size:16.80px;line-height:19px;color:#000;">Cosmetics</div></div>
<div class="c" style="position:absolute;left:564px;top:473px;width:89px;height:24px;overflow:hidden"><div class="t" style="left:2.70px;top:4.00px;font-size:16.80px;line-height:19px;color:#000;">Offline</div></div>
<div class="c" style="position:absolute;left:654px;top:473px;width:113px;height:24px;overflow:hidden"><div class="t" style="left:2.70px;top:4.00px;font-size:16.80px;line-height:19px;color:#000;">L</div></div>
<div class="c" style="position:absolute;left:768px;top:473px;width:113px;height:24px;overflow:hidden"><div class="t" style="left:2.70px;top:4.00px;font-size:16.80px;line-height:19px;color:#000;transform:scaleX(1.0362);transform-origin:0 0;">11/15/2016</div></div>
<div class="c" style="position:absolute;left:882px;top:473px;width:124px;height:24px;overflow:hidden"><div class="t" style="left:37.42px;top:4.00px;font-size:16.80px;line-height:19px;color:#000;">645358741</div></div>
<div class="c" style="position:absolute;left:1007px;top:473px;width:135px;height:24px;overflow:hidden"><div class="t" style="left:45.43px;top:4.00px;font-size:16.80px;line-height:19px;color:#000;transform:scaleX(1.0357);transform-origin:0 0;">12/01/2016</div></div>
<div class="c" style="position:absolute;left:1143px;top:473px;width:81px;height:24px;overflow:hidden"><div class="t" style="left:41.13px;top:4.00px;font-size:16.80px;line-height:19px;color:#000;">6792</div></div>
<div class="c" style="position:absolute;left:1225px;top:473px;width:82px;height:24px;overflow:hidden"><div class="t" style="left:37.46px;top:4.00px;font-size:16.80px;line-height:19px;color:#000;">437.2</div></div>
<div class="c" style="position:absolute;left:1308px;top:473px;width:82px;height:24px;overflow:hidden"><div class="t" style="left:28.12px;top:4.00px;font-size:16.80px;line-height:19px;color:#000;">263.33</div></div>
<div class="c" style="position:absolute;left:1391px;top:473px;width:120px;height:24px;overflow:hidden"><div class="t" style="left:38.09px;top:4.00px;font-size:16.80px;line-height:19px;color:#000;">2969462.4</div></div>
<div class="c" style="position:absolute;left:1512px;top:473px;width:97px;height:24px;overflow:hidden"><div class="t" style="left:15.09px;top:4.00px;font-size:16.80px;line-height:19px;color:#000;">1788537.4</div></div>
<div class="c" style="position:absolute;left:34px;top:498px;width:230px;height:24px;overflow:hidden"><div class="t" style="left:3.60px;top:4.00px;font-size:16.80px;line-height:19px;color:#000;">Asia</div></div>
<div class="c" style="position:absolute;left:265px;top:498px;width:141px;height:24px;overflow:hidden"><div class="t" style="left:2.70px;top:4.00px;font-size:16.80px;line-height:19px;color:#000;">India</div></div>
<div class="c" style="position:absolute;left:407px;top:498px;width:156px;height:24px;overflow:hidden"><div class="t" style="left:2.70px;top:4.00px;font-size:16.80px;line-height:19px;color:#000;">Vegetables</div></div>
<div class="c" style="position:absolute;left:564px;top:498px;width:89px;height:24px;overflow:hidden"><div class="t" style="left:2.70px;top:4.00px;font-size:16.80px;line-height:19px;color:#000;">Online</div></div>
<div class="c" style="position:absolute;left:654px;top:498px;width:113px;height:24px;overflow:hidden"><div class="t" style="left:2.70px;top:4.00px;font-size:16.80px;line-height:19px;color:#000;">C</div></div>
<div class="c" style="position:absolute;left:768px;top:498px;width:113px;height:24px;overflow:hidden"><div class="t" style="left:2.70px;top:4.00px;font-size:16.80px;line-height:19px;color:#000;transform:scaleX(1.0401);transform-origin:0 0;">3/21/2010</div></div>
<div class="c" style="position:absolute;left:882px;top:498px;width:124px;height:24px;overflow:hidden"><div class="t" style="left:37.42px;top:4.00px;font-size:16.80px;line-height:19px;color:#000;">810917636</div></div>
<div class="c" style="position:absolute;left:1007px;top:498px;width:135px;height:24px;overflow:hidden"><div class="t" style="left:45.43px;top:4.00px;font-size:16.80px;line-height:19px;color:#000;transform:scaleX(1.0357);transform-origin:0 0;">04/05/2010</div></div>
<div class="c" style="position:absolute;left:1143px;top:498px;width:81px;height:24px;overflow:hidden"><div class="t" style="left:41.13px;top:4.00px;font-size:16.80px;line-height:19px;color:#000;">5084</div></div>
<div class="c" style="position:absolute;left:1225px;top:498px;width:82px;height:24px;overflow:hidden"><div class="t" style="left:28.12px;top:4.00px;font-size:16.80px;line-height:19px;color:#000;">154.06</div></div>
<div class="c" style="position:absolute;left:1308px;top:498px;width:82px;height:24px;overflow:hidden"><div class="t" style="left:37.46px;top:4.00px;font-size:16.80px;line-height:19px;color:#000;">90.93</div></div>
<div class="c" style="position:absolute;left:1391px;top:498px;width:120px;height:24px;overflow:hidden"><div class="t" style="left:38.09px;top:4.00px;font-size:16.80px;line-height:19px;color:#000;">783241.04</div></div>
<div class="c" style="position:absolute;left:1512px;top:498px;width:97px;height:24px;overflow:hidden"><div class="t" style="left:15.09px;top:4.00px;font-size:16.80px;line-height:19px;color:#000;">462288.12</div></div>
<div class="c" style="position:absolute;left:1610px;top:498px;width:13px;height:24px;overflow:hidden"><div class="t" style="left:6.50px;top:4.00px;font-size:16.80px;line-height:19px;color:#000;">3</div></div>
<div class="c" style="position:absolute;left:34px;top:523px;width:230px;height:24px;overflow:hidden"><div class="t" style="left:3.60px;top:4.00px;font-size:16.80px;line-height:19px;color:#000;">Middle East and North Africa</div></div>
<div class="c" style="position:absolute;left:265px;top:523px;width:141px;height:24px;overflow:hidden"><div class="t" style="left:2.70px;top:4.00px;font-size:16.80px;line-height:19px;color:#000;">Lebanon</div></div>
<div class="c" style="position:absolute;left:407px;top:523px;width:156px;height:24px;overflow:hidden"><div class="t" style="left:2.70px;top:4.00px;font-size:16.80px;line-height:19px;color:#000;">Vegetables</div></div>
<div class="c" style="position:absolute;left:564px;top:523px;width:89px;height:24px;overflow:hidden"><div class="t" style="left:2.70px;top:4.00px;font-size:16.80px;line-height:19px;color:#000;">Online</div></div>
<div class="c" style="position:absolute;left:654px;top:523px;width:113px;height:24px;overflow:hidden"><div class="t" style="left:2.70px;top:4.00px;font-size:16.80px;line-height:19px;color:#000;">L</div></div>
<div class="c" style="position:absolute;left:768px;top:523px;width:113px;height:24px;overflow:hidden"><div class="t" style="left:2.70px;top:4.00px;font-size:16.80px;line-height:19px;color:#000;transform:scaleX(1.0357);transform-origin:0 0;">10/27/2010</div></div>
<div class="c" style="position:absolute;left:882px;top:523px;width:124px;height:24px;overflow:hidden"><div class="t" style="left:37.42px;top:4.00px;font-size:16.80px;line-height:19px;color:#000;">549654082</div></div>
<div class="c" style="position:absolute;left:1007px;top:523px;width:135px;height:24px;overflow:hidden"><div class="t" style="left:2.70px;top:4.00px;font-size:16.80px;line-height:19px;color:#000;transform:scaleX(1.0362);transform-origin:0 0;">11/19/2010</div></div>
<div class="c" style="position:absolute;left:1143px;top:523px;width:81px;height:24px;overflow:hidden"><div class="t" style="left:41.13px;top:4.00px;font-size:16.80px;line-height:19px;color:#000;">9855</div></div>
<div class="c" style="position:absolute;left:1225px;top:523px;width:82px;height:24px;overflow:hidden"><div class="t" style="left:28.12px;top:4.00px;font-size:16.80px;line-height:19px;color:#000;">154.06</div></div>
<div class="c" style="position:absolute;left:1308px;top:523px;width:82px;height:24px;overflow:hidden"><div class="t" style="left:37.46px;top:4.00px;font-size:16.80px;line-height:19px;color:#000;">90.93</div></div>
<div class="c" style="position:absolute;left:1391px;top:523px;width:120px;height:24px;overflow:hidden"><div class="t" style="left:38.09px;top:4.00px;font-size:16.80px;line-height:19px;color:#000;">1518261.3</div></div>
<div class="c" style="position:absolute;left:1512px;top:523px;width:97px;height:24px;overflow:hidden"><div class="t" style="left:16.34px;top:4.00px;font-size:16.80px;line-height:19px;color:#000;">896115.15</div></div>
<div class="c" style="position:absolute;left:1610px;top:523px;width:13px;height:24px;overflow:hidden"><div class="t" style="left:6.50px;top:4.00px;font-size:16.80px;line-height:19px;color:#000;">6</div></div>
<div class="c" style="position:absolute;left:34px;top:548px;width:230px;height:24px;overflow:hidden"><div class="t" style="left:3.60px;top:4.00px;font-size:16.80px;line-height:19px;color:#000;">Middle East and North Africa</div></div>
<div class="c" style="position:absolute;left:265px;top:548px;width:141px;height:24px;overflow:hidden"><div class="t" style="left:2.70px;top:4.00px;font-size:16.80px;line-height:19px;color:#000;">Turkey</div></div>
<div class="c" style="position:absolute;left:407px;top:548px;width:156px;height:24px;overflow:hidden"><div class="t" style="left:2.70px;top:4.00px;font-size:16.80px;line-height:19px;color:#000;">Office Supplies</div></div>
<div class="c" style="position:absolute;left:564px;top:548px;width:89px;height:24px;overflow:hidden"><div class="t" style="left:2.70px;top:4.00px;font-size:16.80px;line-height:19px;color:#000;">Online</div></div>
<div class="c" style="position:absolute;left:654px;top:548px;width:113px;height:24px;overflow:hidden"><div class="t" style="left:2.70px;top:4.00px;font-size:16.80px;line-height:19px;color:#000;">L</div></div>
<div class="c" style="position:absolute;left:768px;top:548px;width:113px;height:24px;overflow:hidden"><div class="t" style="left:2.70px;top:4.00px;font-size:16.80px;line-height:19px;color:#000;transform:scaleX(1.0357);transform-origin:0 0;">10/26/2010</div></div>
<div class="c" style="position:absolute;left:882px;top:548px;width:124px;height:24px;overflow:hidden"><div class="t" style="left:37.42px;top:4.00px;font-size:16.80px;line-height:19px;color:#000;">866904407</div></div>
<div class="c" style="position:absolute;left:1007px;top:548px;width:135px;height:24px;overflow:hidden"><div class="t" style="left:2.70px;top:4.00px;font-size:16.80px;line-height:19px;color:#000;transform:scaleX(1.0362);transform-origin:0 0;">11/13/2010</div></div>
<div class="c" style="position:absolute;left:1143px;top:548px;width:81px;height:24px;overflow:hidden"><div class="t" style="left:41.13px;top:4.00px;font-size:16.80px;line-height:19px;color:#000;">2831</div></div>
<div class="c" style="position:absolute;left:1225px;top:548px;width:82px;height:24px;overflow:hidden"><div class="t" style="left:28.12px;top:4.00px;font-size:16.80px;line-height:19px;color:#000;">651.21</div></div>
<div class="c" style="position:absolute;left:1308px;top:548px;width:82px;height:24px;overflow:hidden"><div class="t" style="left:28.12px;top:4.00px;font-size:16.80px;line-height:19px;color:#000;">524.96</div></div>
<div class="c" style="position:absolute;left:1391px;top:548px;width:120px;height:24px;overflow:hidden"><div class="t" style="left:28.75px;top:4.00px;font-size:16.80px;line-height:19px;color:#000;">1843575.51</div></div>
<div class="c" style="position:absolute;left:1512px;top:548px;width:97px;height:24px;overflow:hidden"><div class="t" style="left:15.09px;top:4.00px;font-size:16.80px;line-height:19px;color:#000;">1486161.8</div></div>
<div class="c" style="position:absolute;left:1610px;top:548px;width:13px;height:24px;overflow:hidden"><div class="t" style="left:6.50px;top:4.00px;font-size:16.80px;line-height:19px;color:#000;">3</div></div>
<div class="c" style="position:absolute;left:34px;top:573px;width:230px;height:24px;overflow:hidden"><div class="t" style="left:3.60px;top:4.00px;font-size:16.80px;line-height:19px;color:#000;">Middle East and North Africa</div></div>
<div class="c" style="position:absolute;left:265px;top:573px;width:141px;height:24px;overflow:hidden"><div class="t" style="left:2.70px;top:4.00px;font-size:16.80px;line-height:19px;color:#000;">Iraq</div></div>
<div class="c" style="position:absolute;left:407px;top:573px;width:156px;height:24px;overflow:hidden"><div class="t" style="left:2.70px;top:4.00px;font-size:16.80px;line-height:19px;color:#000;">Cosmetics</div></div>
<div class="c" style="position:absolute;left:564px;top:573px;width:89px;height:24px;overflow:hidden"><div class="t" style="left:2.70px;top:4.00px;font-size:16.80px;line-height:19px;color:#000;">Offline</div></div>
<div class="c" style="position:absolute;left:654px;top:573px;width:113px;height:24px;overflow:hidden"><div class="t" style="left:2.70px;top:4.00px;font-size:16.80px;line-height:19px;color:#000;">M</div></div>
<div class="c" style="position:absolute;left:768px;top:573px;width:113px;height:24px;overflow:hidden"><div class="t" style="left:2.70px;top:4.00px;font-size:16.80px;line-height:19px;color:#000;transform:scaleX(1.0357);transform-origin:0 0;">10/14/2014</div></div>
<div class="c" style="position:absolute;left:882px;top:573px;width:124px;height:24px;overflow:hidden"><div class="t" style="left:37.42px;top:4.00px;font-size:16.80px;line-height:19px;color:#000;">787317440</div></div>
<div class="c" style="position:absolute;left:1007px;top:573px;width:135px;height:24px;overflow:hidden"><div class="t" style="left:2.70px;top:4.00px;font-size:16.80px;line-height:19px;color:#000;transform:scaleX(1.0357);transform-origin:0 0;">10/19/2014</div></div>
<div class="c" style="position:absolute;left:1143px;top:573px;width:81px;height:24px;overflow:hidden"><div class="t" style="left:41.13px;top:4.00px;font-size:16.80px;line-height:19px;color:#000;">2766</div></div>
<div class="c" style="position:absolute;left:1225px;top:573px;width:82px;height:24px;overflow:hidden"><div class="t" style="left:37.46px;top:4.00px;font-size:16.80px;line-height:19px;color:#000;">437.2</div></div>
<div class="c" style="position:absolute;left:1308px;top:573px;width:82px;height:24px;overflow:hidden"><div class="t" style="left:28.12px;top:4.00px;font-size:16.80px;line-height:19px;color:#000;">263.33</div></div>
<div class="c" style="position:absolute;left:1391px;top:573px;width:120px;height:24px;overflow:hidden"><div class="t" style="left:38.09px;top:4.00px;font-size:16.80px;line-height:19px;color:#000;">1209295.2</div></div>
<div class="c" style="position:absolute;left:1512px;top:573px;width:97px;height:24px;overflow:hidden"><div class="t" style="left:15.09px;top:4.00px;font-size:16.80px;line-height:19px;color:#000;">728370.78</div></div>
<div class="c" style="position:absolute;left:1610px;top:573px;width:13px;height:24px;overflow:hidden"><div class="t" style="left:6.50px;top:4.00px;font-size:16.80px;line-height:19px;color:#000;">4</div></div>
<div class="c" style="position:absolute;left:34px;top:598px;width:230px;height:24px;overflow:hidden"><div class="t" style="left:3.60px;top:4.00px;font-size:16.80px;line-height:19px;color:#000;">Sub-Saharan Africa</div></div>
<div class="c" style="position:absolute;left:265px;top:598px;width:141px;height:24px;overflow:hidden"><div class="t" style="left:2.70px;top:4.00px;font-size:16.80px;line-height:19px;color:#000;">Rwanda</div></div>
<div class="c" style="position:absolute;left:407px;top:598px;width:156px;height:24px;overflow:hidden"><div class="t" style="left:2.70px;top:4.00px;font-size:16.80px;line-height:19px;color:#000;">Personal Care</div></div>
<div class="c" style="position:absolute;left:564px;top:598px;width:89px;height:24px;overflow:hidden"><div class="t" style="left:2.70px;top:4.00px;font-size:16.80px;line-height:19px;color:#000;">Offline</div></div>
<div class="c" style="position:absolute;left:654px;top:598px;width:113px;height:24px;overflow:hidden"><div class="t" style="left:2.70px;top:4.00px;font-size:16.80px;line-height:19px;color:#000;">M</div></div>
<div class="c" style="position:absolute;left:768px;top:598px;width:113px;height:24px;overflow:hidden"><div class="t" style="left:2.70px;top:4.00px;font-size:16.80px;line-height:19px;color:#000;transform:scaleX(1.0401);transform-origin:0 0;">6/15/2013</div></div>
<div class="c" style="position:absolute;left:882px;top:598px;width:124px;height:24px;overflow:hidden"><div class="t" style="left:37.42px;top:4.00px;font-size:16.80px;line-height:19px;color:#000;">145854508</div></div>
<div class="c" style="position:absolute;left:1007px;top:598px;width:135px;height:24px;overflow:hidden"><div class="t" style="left:45.43px;top:4.00px;font-size:16.80px;line-height:19px;color:#000;transform:scaleX(1.0357);transform-origin:0 0;">07/08/2013</div></div>
<div class="c" style="position:absolute;left:1143px;top:598px;width:81px;height:24px;overflow:hidden"><div class="t" style="left:50.47px;top:4.00px;font-size:16.80px;line-height:19px;color:#000;">445</div></div>
<div class="c" style="position:absolute;left:1225px;top:598px;width:82px;height:24px;overflow:hidden"><div class="t" style="left:37.46px;top:4.00px;font-size:16.80px;line-height:19px;color:#000;">81.73</div></div>
<div class="c" style="position:absolute;left:1308px;top:598px;width:82px;height:24px;overflow:hidden"><div class="t" style="left:37.46px;top:4.00px;font-size:16.80px;line-height:19px;color:#000;">56.67</div></div>
<div class="c" style="position:absolute;left:1391px;top:598px;width:120px;height:24px;overflow:hidden"><div class="t" style="left:47.44px;top:4.00px;font-size:16.80px;line-height:19px;color:#000;">36369.85</div></div>
<div class="c" style="position:absolute;left:1512px;top:598px;width:97px;height:24px;overflow:hidden"><div class="t" style="left:24.44px;top:4.00px;font-size:16.80px;line-height:19px;color:#000;">25218.15</div></div>
<div class="c" style="position:absolute;left:34px;top:623px;width:230px;height:24px;overflow:hidden"><div class="t" style="left:3.60px;top:4.00px;font-size:16.80px;line-height:19px;color:#000;">Europe</div></div>
<div class="c" style="position:absolute;left:265px;top:623px;width:141px;height:24px;overflow:hidden"><div class="t" style="left:2.70px;top:4.00px;font-size:16.80px;line-height:19px;color:#000;">Ukraine</div></div>
<div class="c" style="position:absolute;left:407px;top:623px;width:156px;height:24px;overflow:hidden"><div class="t" style="left:2.70px;top:4.00px;font-size:16.80px;line-height:19px;color:#000;">Baby Food</div></div>
<div class="c" style="position:absolute;left:564px;top:623px;width:89px;height:24px;overflow:hidden"><div class="t" style="left:2.70px;top:4.00px;font-size:16.80px;line-height:19px;color:#000;">Offline</div></div>
<div class="c" style="position:absolute;left:654px;top:623px;width:113px;height:24px;overflow:hidden"><div class="t" style="left:2.70px;top:4.00px;font-size:16.80px;line-height:19px;color:#000;">M</div></div>
<div class="c" style="position:absolute;left:768px;top:623px;width:113px;height:24px;overflow:hidden"><div class="t" style="left:23.43px;top:4.00px;font-size:16.80px;line-height:19px;color:#000;transform:scaleX(1.0357);transform-origin:0 0;">05/07/2017</div></div>
<div class="c" style="position:absolute;left:882px;top:623px;width:124px;height:24px;overflow:hidden"><div class="t" style="left:37.42px;top:4.00px;font-size:16.80px;line-height:19px;color:#000;">581689441</div></div>
<div class="c" style="position:absolute;left:1007px;top:623px;width:135px;height:24px;overflow:hidden"><div class="t" style="left:2.70px;top:4.00px;font-size:16.80px;line-height:19px;color:#000;transform:scaleX(1.0401);transform-origin:0 0;">5/29/2017</div></div>
<div class="c" style="position:absolute;left:1143px;top:623px;width:81px;height:24px;overflow:hidden"><div class="t" style="left:41.13px;top:4.00px;font-size:16.80px;line-height:19px;color:#000;">3687</div></div>
<div class="c" style="position:absolute;left:1225px;top:623px;width:82px;height:24px;overflow:hidden"><div class="t" style="left:28.12px;top:4.00px;font-size:16.80px;line-height:19px;color:#000;">255.28</div></div>
<div class="c" style="position:absolute;left:1308px;top:623px;width:82px;height:24px;overflow:hidden"><div class="t" style="left:28.12px;top:4.00px;font-size:16.80px;line-height:19px;color:#000;">159.42</div></div>
<div class="c" style="position:absolute;left:1391px;top:623px;width:120px;height:24px;overflow:hidden"><div class="t" style="left:38.09px;top:4.00px;font-size:16.80px;line-height:19px;color:#000;">941217.36</div></div>
<div class="c" style="position:absolute;left:1512px;top:623px;width:97px;height:24px;overflow:hidden"><div class="t" style="left:15.09px;top:4.00px;font-size:16.80px;line-height:19px;color:#000;">587781.54</div></div>
<div class="c" style="position:absolute;left:1610px;top:623px;width:13px;height:24px;overflow:hidden"><div class="t" style="left:6.50px;top:4.00px;font-size:16.80px;line-height:19px;color:#000;">3</div></div>
<div class="c" style="position:absolute;left:34px;top:648px;width:230px;height:24px;overflow:hidden"><div class="t" style="left:3.60px;top:4.00px;font-size:16.80px;line-height:19px;color:#000;">Europe</div></div>
<div class="c" style="position:absolute;left:265px;top:648px;width:141px;height:24px;overflow:hidden"><div class="t" style="left:2.70px;top:4.00px;font-size:16.80px;line-height:19px;color:#000;">Finland</div></div>
<div class="c" style="position:absolute;left:407px;top:648px;width:156px;height:24px;overflow:hidden"><div class="t" style="left:2.70px;top:4.00px;font-size:16.80px;line-height:19px;color:#000;">Office Supplies</div></div>
<div class="c" style="position:absolute;left:564px;top:648px;width:89px;height:24px;overflow:hidden"><div class="t" style="left:2.70px;top:4.00px;font-size:16.80px;line-height:19px;color:#000;">Online</div></div>
<div class="c" style="position:absolute;left:654px;top:648px;width:113px;height:24px;overflow:hidden"><div class="t" style="left:2.70px;top:4.00px;font-size:16.80px;line-height:19px;color:#000;">H</div></div>
<div class="c" style="position:absolute;left:768px;top:648px;width:113px;height:24px;overflow:hidden"><div class="t" style="left:2.70px;top:4.00px;font-size:16.80px;line-height:19px;color:#000;transform:scaleX(1.0401);transform-origin:0 0;">5/21/2015</div></div>
<div class="c" style="position:absolute;left:882px;top:648px;width:124px;height:24px;overflow:hidden"><div class="t" style="left:37.42px;top:4.00px;font-size:16.80px;line-height:19px;color:#000;">193508565</div></div>
<div class="c" style="position:absolute;left:1007px;top:648px;width:135px;height:24px;overflow:hidden"><div class="t" style="left:45.43px;top:4.00px;font-size:16.80px;line-height:19px;color:#000;transform:scaleX(1.0357);transform-origin:0 0;">07/03/2015</div></div>
<div class="c" style="position:absolute;left:1143px;top:648px;width:81px;height:24px;overflow:hidden"><div class="t" style="left:41.13px;top:4.00px;font-size:16.80px;line-height:19px;color:#000;">2339</div></div>
<div class="c" style="position:absolute;left:1225px;top:648px;width:82px;height:24px;overflow:hidden"><div class="t" style="left:28.12px;top:4.00px;font-size:16.80px;line-height:19px;color:#000;">651.21</div></div>
<div class="c" style="position:absolute;left:1308px;top:648px;width:82px;height:24px;overflow:hidden"><div class="t" style="left:28.12px;top:4.00px;font-size:16.80px;line-height:19px;color:#000;">524.96</div></div>
<div class="c" style="position:absolute;left:1391px;top:648px;width:120px;height:24px;overflow:hidden"><div class="t" style="left:28.75px;top:4.00px;font-size:16.80px;line-height:19px;color:#000;">1523180.19</div></div>
<div class="c" style="position:absolute;left:1512px;top:648px;width:97px;height:24px;overflow:hidden"><div class="t" style="left:15.09px;top:4.00px;font-size:16.80px;line-height:19px;color:#000;">1227881.4</div></div>
<div class="c" style="position:absolute;left:1610px;top:648px;width:13px;height:24px;overflow:hidden"><div class="t" style="left:6.50px;top:4.00px;font-size:16.80px;line-height:19px;color:#000;">2</div></div>
<div class="c" style="position:absolute;left:34px;top:673px;width:230px;height:24px;overflow:hidden"><div class="t" style="left:3.60px;top:4.00px;font-size:16.80px;line-height:19px;color:#000;">Sub-Saharan Africa</div></div>
<div class="c" style="position:absolute;left:265px;top:673px;width:141px;height:24px;overflow:hidden"><div class="t" style="left:2.70px;top:4.00px;font-size:16.80px;line-height:19px;color:#000;">South Sudan</div></div>
<div class="c" style="position:absolute;left:407px;top:673px;width:156px;height:24px;overflow:hidden"><div class="t" style="left:2.70px;top:4.00px;font-size:16.80px;line-height:19px;color:#000;">Beverages</div></div>
<div class="c" style="position:absolute;left:564px;top:673px;width:89px;height:24px;overflow:hidden"><div class="t" style="left:2.70px;top:4.00px;font-size:16.80px;line-height:19px;color:#000;">Offline</div></div>
<div class="c" style="position:absolute;left:654px;top:673px;width:113px;height:24px;overflow:hidden"><div class="t" style="left:2.70px;top:4.00px;font-size:16.80px;line-height:19px;color:#000;">H</div></div>
<div class="c" style="position:absolute;left:768px;top:673px;width:113px;height:24px;overflow:hidden"><div class="t" style="left:2.70px;top:4.00px;font-size:16.80px;line-height:19px;color:#000;transform:scaleX(1.0401);transform-origin:0 0;">6/28/2016</div></div>
<div class="c" style="position:absolute;left:882px;top:673px;width:124px;height:24px;overflow:hidden"><div class="t" style="left:38.67px;top:4.00px;font-size:16.80px;line-height:19px;color:#000;">750110709</div></div>
<div class="c" style="position:absolute;left:1007px;top:673px;width:135px;height:24px;overflow:hidden"><div class="t" style="left:2.70px;top:4.00px;font-size:16.80px;line-height:19px;color:#000;transform:scaleX(1.0401);transform-origin:0 0;">7/14/2016</div></div>
<div class="c" style="position:absolute;left:1143px;top:673px;width:81px;height:24px;overflow:hidden"><div class="t" style="left:41.13px;top:4.00px;font-size:16.80px;line-height:19px;color:#000;">3283</div></div>
<div class="c" style="position:absolute;left:1225px;top:673px;width:82px;height:24px;overflow:hidden"><div class="t" style="left:37.46px;top:4.00px;font-size:16.80px;line-height:19px;color:#000;">47.45</div></div>
<div class="c" style="position:absolute;left:1308px;top:673px;width:82px;height:24px;overflow:hidden"><div class="t" style="left:37.46px;top:4.00px;font-size:16.80px;line-height:19px;color:#000;">31.79</div></div>
<div class="c" style="position:absolute;left:1391px;top:673px;width:120px;height:24px;overflow:hidden"><div class="t" style="left:38.09px;top:4.00px;font-size:16.80px;line-height:19px;color:#000;">155778.35</div></div>
<div class="c" style="position:absolute;left:1512px;top:673px;width:97px;height:24px;overflow:hidden"><div class="t" style="left:15.09px;top:4.00px;font-size:16.80px;line-height:19px;color:#000;">104366.57</div></div>
<div class="c" style="position:absolute;left:34px;top:698px;width:230px;height:23px;overflow:hidden"><div class="t" style="left:3.60px;top:4.00px;font-size:16.80px;line-height:19px;color:#000;">Central America and the Caribbean</div></div>
<div class="c" style="position:absolute;left:265px;top:698px;width:141px;height:23px;overflow:hidden"><div class="t" style="left:2.70px;top:4.00px;font-size:16.80px;line-height:19px;color:#000;">Antigua and Barbuda</div></div>
<div class="c" style="position:absolute;left:407px;top:698px;width:156px;height:23px;overflow:hidden"><div class="t" style="left:2.70px;top:4.00px;font-size:16.80px;line-height:19px;color:#000;">Fruits</div></div>
<div class="c" style="position:absolute;left:564px;top:698px;width:89px;height:23px;overflow:hidden"><div class="t" style="left:2.70px;top:4.00px;font-size:16.80px;line-height:19px;color:#000;">Offline</div></div>
<div class="c" style="position:absolute;left:654px;top:698px;width:113px;height:23px;overflow:hidden"><div class="t" style="left:2.70px;top:4.00px;font-size:16.80px;line-height:19px;color:#000;">M</div></div>
<div class="c" style="position:absolute;left:768px;top:698px;width:113px;height:23px;overflow:hidden"><div class="t" style="left:23.43px;top:4.00px;font-size:16.80px;line-height:19px;color:#000;transform:scaleX(1.0357);transform-origin:0 0;">07/06/2015</div></div>
<div class="c" style="position:absolute;left:882px;top:698px;width:124px;height:23px;overflow:hidden"><div class="t" style="left:37.42px;top:4.00px;font-size:16.80px;line-height:19px;color:#000;">940607202</div></div>
<div class="c" style="position:absolute;left:1007px;top:698px;width:135px;height:23px;overflow:hidden"><div class="t" style="left:45.43px;top:4.00px;font-size:16.80px;line-height:19px;color:#000;transform:scaleX(1.0357);transform-origin:0 0;">08/12/2015</div></div>
<div class="c" style="position:absolute;left:1143px;top:698px;width:81px;height:23px;overflow:hidden"><div class="t" style="left:41.13px;top:4.00px;font-size:16.80px;line-height:19px;color:#000;">5428</div></div>
<div class="c" style="position:absolute;left:1225px;top:698px;width:82px;height:23px;overflow:hidden"><div class="t" style="left:46.81px;top:4.00px;font-size:16.80px;line-height:19px;color:#000;">9.33</div></div>
<div class="c" style="position:absolute;left:1308px;top:698px;width:82px;height:23px;overflow:hidden"><div class="t" style="left:46.81px;top:4.00px;font-size:16.80px;line-height:19px;color:#000;">6.92</div></div>
<div class="c" style="position:absolute;left:1391px;top:698px;width:120px;height:23px;overflow:hidden"><div class="t" style="left:47.44px;top:4.00px;font-size:16.80px;line-height:19px;color:#000;">50643.24</div></div>
<div class="c" style="position:absolute;left:1512px;top:698px;width:97px;height:23px;overflow:hidden"><div class="t" style="left:24.44px;top:4.00px;font-size:16.80px;line-height:19px;color:#000;">37561.76</div></div>
<div class="c" style="position:absolute;left:34px;top:722px;width:230px;height:24px;overflow:hidden"><div class="t" style="left:3.60px;top:4.00px;font-size:16.80px;line-height:19px;color:#000;">Middle East and North Africa</div></div>
<div class="c" style="position:absolute;left:265px;top:722px;width:141px;height:24px;overflow:hidden"><div class="t" style="left:2.70px;top:4.00px;font-size:16.80px;line-height:19px;color:#000;">Kuwait</div></div>
<div class="c" style="position:absolute;left:407px;top:722px;width:156px;height:24px;overflow:hidden"><div class="t" style="left:2.70px;top:4.00px;font-size:16.80px;line-height:19px;color:#000;">Personal Care</div></div>
<div class="c" style="position:absolute;left:564px;top:722px;width:89px;height:24px;overflow:hidden"><div class="t" style="left:2.70px;top:4.00px;font-size:16.80px;line-height:19px;color:#000;">Online</div></div>
<div class="c" style="position:absolute;left:654px;top:722px;width:113px;height:24px;overflow:hidden"><div class="t" style="left:2.70px;top:4.00px;font-size:16.80px;line-height:19px;color:#000;">C</div></div>
<div class="c" style="position:absolute;left:768px;top:722px;width:113px;height:24px;overflow:hidden"><div class="t" style="left:2.70px;top:4.00px;font-size:16.80px;line-height:19px;color:#000;transform:scaleX(1.0401);transform-origin:0 0;">2/18/2012</div></div>
<div class="c" style="position:absolute;left:882px;top:722px;width:124px;height:24px;overflow:hidden"><div class="t" style="left:37.42px;top:4.00px;font-size:16.80px;line-height:19px;color:#000;">424421870</div></div>
<div class="c" style="position:absolute;left:1007px;top:722px;width:135px;height:24px;overflow:hidden"><div class="t" style="left:2.70px;top:4.00px;font-size:16.80px;line-height:19px;color:#000;transform:scaleX(1.0401);transform-origin:0 0;">3/23/2012</div></div>
<div class="c" style="position:absolute;left:1143px;top:722px;width:81px;height:24px;overflow:hidden"><div class="t" style="left:41.13px;top:4.00px;font-size:16.80px;line-height:19px;color:#000;">4718</div></div>
<div class="c" style="position:absolute;left:1225px;top:722px;width:82px;height:24px;overflow:hidden"><div class="t" style="left:37.46px;top:4.00px;font-size:16.80px;line-height:19px;color:#000;">81.73</div></div>
<div class="c" style="position:absolute;left:1308px;top:722px;width:82px;height:24px;overflow:hidden"><div class="t" style="left:37.46px;top:4.00px;font-size:16.80px;line-height:19px;color:#000;">56.67</div></div>
<div class="c" style="position:absolute;left:1391px;top:722px;width:120px;height:24px;overflow:hidden"><div class="t" style="left:38.09px;top:4.00px;font-size:16.80px;line-height:19px;color:#000;">385602.14</div></div>
<div class="c" style="position:absolute;left:1512px;top:722px;width:97px;height:24px;overflow:hidden"><div class="t" style="left:15.09px;top:4.00px;font-size:16.80px;line-height:19px;color:#000;">267369.06</div></div>
<div class="c" style="position:absolute;left:1610px;top:722px;width:13px;height:24px;overflow:hidden"><div class="t" style="left:6.50px;top:4.00px;font-size:16.80px;line-height:19px;color:#000;">1</div></div>
<div class="c" style="position:absolute;left:34px;top:747px;width:230px;height:24px;overflow:hidden"><div class="t" style="left:3.60px;top:4.00px;font-size:16.80px;line-height:19px;color:#000;">Europe</div></div>
<div class="c" style="position:absolute;left:265px;top:747px;width:141px;height:24px;overflow:hidden"><div class="t" style="left:2.70px;top:4.00px;font-size:16.80px;line-height:19px;color:#000;">United Kingdom</div></div>
<div class="c" style="position:absolute;left:407px;top:747px;width:156px;height:24px;overflow:hidden"><div class="t" style="left:2.70px;top:4.00px;font-size:16.80px;line-height:19px;color:#000;">Office Supplies</div></div>
<div class="c" style="position:absolute;left:564px;top:747px;width:89px;height:24px;overflow:hidden"><div class="t" style="left:2.70px;top:4.00px;font-size:16.80px;line-height:19px;color:#000;">Offline</div></div>
<div class="c" style="position:absolute;left:654px;top:747px;width:113px;height:24px;overflow:hidden"><div class="t" style="left:2.70px;top:4.00px;font-size:16.80px;line-height:19px;color:#000;">C</div></div>
<div class="c" style="position:absolute;left:768px;top:747px;width:113px;height:24px;overflow:hidden"><div class="t" style="left:23.43px;top:4.00px;font-size:16.80px;line-height:19px;color:#000;transform:scaleX(1.0357);transform-origin:0 0;">09/09/2014</div></div>
<div class="c" style="position:absolute;left:882px;top:747px;width:124px;height:24px;overflow:hidden"><div class="t" style="left:37.42px;top:4.00px;font-size:16.80px;line-height:19px;color:#000;">281291043</div></div>
<div class="c" style="position:absolute;left:1007px;top:747px;width:135px;height:24px;overflow:hidden"><div class="t" style="left:2.70px;top:4.00px;font-size:16.80px;line-height:19px;color:#000;transform:scaleX(1.0401);transform-origin:0 0;">9/14/2014</div></div>
<div class="c" style="position:absolute;left:1143px;top:747px;width:81px;height:24px;overflow:hidden"><div class="t" style="left:41.13px;top:4.00px;font-size:16.80px;line-height:19px;color:#000;">9125</div></div>
<div class="c" style="position:absolute;left:1225px;top:747px;width:82px;height:24px;overflow:hidden"><div class="t" style="left:28.12px;top:4.00px;font-size:16.80px;line-height:19px;color:#000;">651.21</div></div>
<div class="c" style="position:absolute;left:1308px;top:747px;width:82px;height:24px;overflow:hidden"><div class="t" style="left:28.12px;top:4.00px;font-size:16.80px;line-height:19px;color:#000;">524.96</div></div>
<div class="c" style="position:absolute;left:1391px;top:747px;width:120px;height:24px;overflow:hidden"><div class="t" style="left:28.75px;top:4.00px;font-size:16.80px;line-height:19px;color:#000;">5942291.25</div></div>
<div class="c" style="position:absolute;left:1512px;top:747px;width:97px;height:24px;overflow:hidden"><div class="t" style="left:29.10px;top:4.00px;font-size:16.80px;line-height:19px;color:#000;">4790260</div></div>
<div class="c" style="position:absolute;left:1610px;top:747px;width:13px;height:24px;overflow:hidden"><div class="t" style="left:6.50px;top:4.00px;font-size:16.80px;line-height:19px;color:#000;">1</div></div>
<div class="c" style="position:absolute;left:34px;top:772px;width:230px;height:24px;overflow:hidden"><div class="t" style="left:3.60px;top:4.00px;font-size:16.80px;line-height:19px;color:#000;">Central America and the Caribbean</div></div>
<div class="c" style="position:absolute;left:265px;top:772px;width:141px;height:24px;overflow:hidden"><div class="t" style="left:2.70px;top:4.00px;font-size:16.80px;line-height:19px;color:#000;">Saint Kitts and Nevis</div></div>
<div class="c" style="position:absolute;left:407px;top:772px;width:156px;height:24px;overflow:hidden"><div class="t" style="left:2.70px;top:4.00px;font-size:16.80px;line-height:19px;color:#000;">Personal Care</div></div>
<div class="c" style="position:absolute;left:564px;top:772px;width:89px;height:24px;overflow:hidden"><div class="t" style="left:2.70px;top:4.00px;font-size:16.80px;line-height:19px;color:#000;">Online</div></div>
<div class="c" style="position:absolute;left:654px;top:772px;width:113px;height:24px;overflow:hidden"><div class="t" style="left:2.70px;top:4.00px;font-size:16.80px;line-height:19px;color:#000;">C</div></div>
<div class="c" style="position:absolute;left:768px;top:772px;width:113px;height:24px;overflow:hidden"><div class="t" style="left:2.70px;top:4.00px;font-size:16.80px;line-height:19px;color:#000;transform:scaleX(1.0401);transform-origin:0 0;">8/24/2013</div></div>
<div class="c" style="position:absolute;left:882px;top:772px;width:124px;height:24px;overflow:hidden"><div class="t" style="left:37.42px;top:4.00px;font-size:16.80px;line-height:19px;color:#000;">761263549</div></div>
<div class="c" style="position:absolute;left:1007px;top:772px;width:135px;height:24px;overflow:hidden"><div class="t" style="left:2.70px;top:4.00px;font-size:16.80px;line-height:19px;color:#000;transform:scaleX(1.0401);transform-origin:0 0;">9/25/2013</div></div>
<div class="c" style="position:absolute;left:1143px;top:772px;width:81px;height:24px;overflow:hidden"><div class="t" style="left:41.13px;top:4.00px;font-size:16.80px;line-height:19px;color:#000;">3656</div></div>
<div class="c" style="position:absolute;left:1225px;top:772px;width:82px;height:24px;overflow:hidden"><div class="t" style="left:37.46px;top:4.00px;font-size:16.80px;line-height:19px;color:#000;">81.73</div></div>
<div class="c" style="position:absolute;left:1308px;top:772px;width:82px;height:24px;overflow:hidden"><div class="t" style="left:37.46px;top:4.00px;font-size:16.80px;line-height:19px;color:#000;">56.67</div></div>
<div class="c" style="position:absolute;left:1391px;top:772px;width:120px;height:24px;overflow:hidden"><div class="t" style="left:38.09px;top:4.00px;font-size:16.80px;line-height:19px;color:#000;">155778.35</div></div>
<div class="c" style="position:absolute;left:1512px;top:772px;width:97px;height:24px;overflow:hidden"><div class="t" style="left:15.09px;top:4.00px;font-size:16.80px;line-height:19px;color:#000;">104366.57</div></div>
<div class="c" style="position:absolute;left:34px;top:797px;width:230px;height:24px;overflow:hidden"><div class="t" style="left:3.60px;top:4.00px;font-size:16.80px;line-height:19px;color:#000;">Central America and the Caribbean</div></div>
<div class="c" style="position:absolute;left:265px;top:797px;width:141px;height:24px;overflow:hidden"><div class="t" style="left:2.70px;top:4.00px;font-size:16.80px;line-height:19px;color:#000;">Antigua and Barbuda</div></div>
<div class="c" style="position:absolute;left:407px;top:797px;width:156px;height:24px;overflow:hidden"><div class="t" style="left:2.70px;top:4.00px;font-size:16.80px;line-height:19px;color:#000;">Personal Care</div></div>
<div class="c" style="position:absolute;left:564px;top:797px;width:89px;height:24px;overflow:hidden"><div class="t" style="left:2.70px;top:4.00px;font-size:16.80px;line-height:19px;color:#000;">Offline</div></div>
<div class="c" style="position:absolute;left:654px;top:797px;width:113px;height:24px;overflow:hidden"><div class="t" style="left:2.70px;top:4.00px;font-size:16.80px;line-height:19px;color:#000;">M</div></div>
<div class="c" style="position:absolute;left:768px;top:797px;width:113px;height:24px;overflow:hidden"><div class="t" style="left:23.43px;top:4.00px;font-size:16.80px;line-height:19px;color:#000;transform:scaleX(1.0357);transform-origin:0 0;">09/04/2015</div></div>
<div class="c" style="position:absolute;left:882px;top:797px;width:124px;height:24px;overflow:hidden"><div class="t" style="left:37.42px;top:4.00px;font-size:16.80px;line-height:19px;color:#000;">834700715</div></div>
<div class="c" style="position:absolute;left:1007px;top:797px;width:135px;height:24px;overflow:hidden"><div class="t" style="left:2.70px;top:4.00px;font-size:16.80px;line-height:19px;color:#000;transform:scaleX(1.0401);transform-origin:0 0;">9/16/2015</div></div>
<div class="c" style="position:absolute;left:1143px;top:797px;width:81px;height:24px;overflow:hidden"><div class="t" style="left:41.13px;top:4.00px;font-size:16.80px;line-height:19px;color:#000;">5345</div></div>
<div class="c" style="position:absolute;left:1225px;top:797px;width:82px;height:24px;overflow:hidden"><div class="t" style="left:37.46px;top:4.00px;font-size:16.80px;line-height:19px;color:#000;">81.73</div></div>
<div class="c" style="position:absolute;left:1308px;top:797px;width:82px;height:24px;overflow:hidden"><div class="t" style="left:37.46px;top:4.00px;font-size:16.80px;line-height:19px;color:#000;">56.67</div></div>
<div class="c" style="position:absolute;left:1391px;top:797px;width:120px;height:24px;overflow:hidden"><div class="t" style="left:47.44px;top:4.00px;font-size:16.80px;line-height:19px;color:#000;">50643.24</div></div>
<div class="c" style="position:absolute;left:1512px;top:797px;width:97px;height:24px;overflow:hidden"><div class="t" style="left:24.44px;top:4.00px;font-size:16.80px;line-height:19px;color:#000;">37561.76</div></div>
<div class="c" style="position:absolute;left:34px;top:822px;width:230px;height:24px;overflow:hidden"><div class="t" style="left:3.60px;top:4.00px;font-size:16.80px;line-height:19px;color:#000;">Central America and the Caribbean</div></div>
<div class="c" style="position:absolute;left:265px;top:822px;width:141px;height:24px;overflow:hidden"><div class="t" style="left:2.70px;top:4.00px;font-size:16.80px;line-height:19px;color:#000;">Saint Lucia</div></div>
<div class="c" style="position:absolute;left:407px;top:822px;width:156px;height:24px;overflow:hidden"><div class="t" style="left:2.70px;top:4.00px;font-size:16.80px;line-height:19px;color:#000;">Cosmetics</div></div>
<div class="c" style="position:absolute;left:564px;top:822px;width:89px;height:24px;overflow:hidden"><div class="t" style="left:2.70px;top:4.00px;font-size:16.80px;line-height:19px;color:#000;">Offline</div></div>
<div class="c" style="position:absolute;left:654px;top:822px;width:113px;height:24px;overflow:hidden"><div class="t" style="left:2.70px;top:4.00px;font-size:16.80px;line-height:19px;color:#000;">L</div></div>
<div class="c" style="position:absolute;left:768px;top:822px;width:113px;height:24px;overflow:hidden"><div class="t" style="left:2.70px;top:4.00px;font-size:16.80px;line-height:19px;color:#000;transform:scaleX(1.0401);transform-origin:0 0;">2/26/2017</div></div>
<div class="c" style="position:absolute;left:882px;top:822px;width:124px;height:24px;overflow:hidden"><div class="t" style="left:37.42px;top:4.00px;font-size:16.80px;line-height:19px;color:#000;">442276370</div></div>
<div class="c" style="position:absolute;left:1007px;top:822px;width:135px;height:24px;overflow:hidden"><div class="t" style="left:2.70px;top:4.00px;font-size:16.80px;line-height:19px;color:#000;transform:scaleX(1.0401);transform-origin:0 0;">3/28/2017</div></div>
<div class="c" style="position:absolute;left:1143px;top:822px;width:81px;height:24px;overflow:hidden"><div class="t" style="left:41.13px;top:4.00px;font-size:16.80px;line-height:19px;color:#000;">8261</div></div>
<div class="c" style="position:absolute;left:1225px;top:822px;width:82px;height:24px;overflow:hidden"><div class="t" style="left:37.46px;top:4.00px;font-size:16.80px;line-height:19px;color:#000;">437.2</div></div>
<div class="c" style="position:absolute;left:1308px;top:822px;width:82px;height:24px;overflow:hidden"><div class="t" style="left:28.12px;top:4.00px;font-size:16.80px;line-height:19px;color:#000;">263.33</div></div>
<div class="c" style="position:absolute;left:1391px;top:822px;width:120px;height:24px;overflow:hidden"><div class="t" style="left:38.09px;top:4.00px;font-size:16.80px;line-height:19px;color:#000;">385602.14</div></div>
<div class="c" style="position:absolute;left:1512px;top:822px;width:97px;height:24px;overflow:hidden"><div class="t" style="left:15.09px;top:4.00px;font-size:16.80px;line-height:19px;color:#000;">267369.06</div></div>
<div class="c" style="position:absolute;left:1610px;top:822px;width:13px;height:24px;overflow:hidden"><div class="t" style="left:6.50px;top:4.00px;font-size:16.80px;line-height:19px;color:#000;">1</div></div>
<div class="c" style="position:absolute;left:34px;top:847px;width:230px;height:11px;overflow:hidden"><div class="t" style="left:3.60px;top:4.00px;font-size:16.80px;line-height:19px;color:#000;">Middle East and North Africa</div></div>
<div class="c" style="position:absolute;left:265px;top:847px;width:141px;height:11px;overflow:hidden"><div class="t" style="left:2.70px;top:4.00px;font-size:16.80px;line-height:19px;color:#000;">Kuwait</div></div>
<div class="c" style="position:absolute;left:407px;top:847px;width:156px;height:11px;overflow:hidden"><div class="t" style="left:2.70px;top:4.00px;font-size:16.80px;line-height:19px;color:#000;">Personal Care</div></div>
<div class="c" style="position:absolute;left:564px;top:847px;width:89px;height:11px;overflow:hidden"><div class="t" style="left:2.70px;top:4.00px;font-size:16.80px;line-height:19px;color:#000;">Offline</div></div>
<div class="c" style="position:absolute;left:654px;top:847px;width:113px;height:11px;overflow:hidden"><div class="t" style="left:2.70px;top:4.00px;font-size:16.80px;line-height:19px;color:#000;">H</div></div>
<div class="c" style="position:absolute;left:768px;top:847px;width:113px;height:11px;overflow:hidden"><div class="t" style="left:2.70px;top:4.00px;font-size:16.80px;line-height:19px;color:#000;transform:scaleX(1.0401);transform-origin:0 0;">7/15/2015</div></div>
<div class="c" style="position:absolute;left:882px;top:847px;width:124px;height:11px;overflow:hidden"><div class="t" style="left:37.42px;top:4.00px;font-size:16.80px;line-height:19px;color:#000;">944076849</div></div>
<div class="c" style="position:absolute;left:1007px;top:847px;width:135px;height:11px;overflow:hidden"><div class="t" style="left:2.70px;top:4.00px;font-size:16.80px;line-height:19px;color:#000;transform:scaleX(1.0401);transform-origin:0 0;">8/13/2015</div></div>
<div class="c" style="position:absolute;left:1143px;top:847px;width:81px;height:11px;overflow:hidden"><div class="t" style="left:41.13px;top:4.00px;font-size:16.80px;line-height:19px;color:#000;">8592</div></div>
<div class="c" style="position:absolute;left:1225px;top:847px;width:82px;height:11px;overflow:hidden"><div class="t" style="left:37.46px;top:4.00px;font-size:16.80px;line-height:19px;color:#000;">81.73</div></div>
<div class="c" style="position:absolute;left:1308px;top:847px;width:82px;height:11px;overflow:hidden"><div class="t" style="left:37.46px;top:4.00px;font-size:16.80px;line-height:19px;color:#000;">56.67</div></div>
<div class="c" style="position:absolute;left:1391px;top:847px;width:120px;height:11px;overflow:hidden"><div class="t" style="left:28.75px;top:4.00px;font-size:16.80px;line-height:19px;color:#000;">5942291.25</div></div>
<div class="c" style="position:absolute;left:1512px;top:847px;width:97px;height:11px;overflow:hidden"><div class="t" style="left:29.10px;top:4.00px;font-size:16.80px;line-height:19px;color:#000;">4790260</div></div>
<div class="c" style="position:absolute;left:1610px;top:847px;width:13px;height:11px;overflow:hidden"><div class="t" style="left:6.50px;top:4.00px;font-size:16.80px;line-height:19px;color:#000;">6</div></div>
<div style="position:absolute;left:33px;top:149px;width:1590px;height:23px;background:linear-gradient(#5f5f5f,#676767)"></div>
<div style="position:absolute;left:0px;top:148px;width:1623px;height:1px;background:#444444"></div>
<div style="position:absolute;left:0px;top:149px;width:33px;height:25px;background:#4e4e4e"></div>
<div style="position:absolute;left:33px;top:149px;width:1px;height:23px;background:#8e8e8e"></div>
<div style="position:absolute;left:264px;top:149px;width:1px;height:23px;background:#8e8e8e"></div>
<div style="position:absolute;left:406px;top:149px;width:1px;height:23px;background:#8e8e8e"></div>
<div style="position:absolute;left:563px;top:149px;width:1px;height:23px;background:#8e8e8e"></div>
<div style="position:absolute;left:653px;top:149px;width:1px;height:23px;background:#8e8e8e"></div>
<div style="position:absolute;left:767px;top:149px;width:1px;height:23px;background:#8e8e8e"></div>
<div style="position:absolute;left:881px;top:149px;width:1px;height:23px;background:#8e8e8e"></div>
<div style="position:absolute;left:1006px;top:149px;width:1px;height:23px;background:#8e8e8e"></div>
<div style="position:absolute;left:1142px;top:149px;width:1px;height:23px;background:#8e8e8e"></div>
<div style="position:absolute;left:1224px;top:149px;width:1px;height:23px;background:#8e8e8e"></div>
<div style="position:absolute;left:1307px;top:149px;width:1px;height:23px;background:#8e8e8e"></div>
<div style="position:absolute;left:1390px;top:149px;width:1px;height:23px;background:#8e8e8e"></div>
<div style="position:absolute;left:1511px;top:149px;width:1px;height:23px;background:#8e8e8e"></div>
<div style="position:absolute;left:1609px;top:149px;width:1px;height:23px;background:#8e8e8e"></div>
<div class="t" style="left:142.83px;top:154.00px;font-size:17.00px;line-height:19px;color:#ffffff;">A</div>
<div class="t" style="left:329.33px;top:154.00px;font-size:17.00px;line-height:19px;color:#ffffff;">B</div>
<div class="t" style="left:478.36px;top:154.00px;font-size:17.00px;line-height:19px;color:#ffffff;">C</div>
<div class="t" style="left:601.86px;top:154.00px;font-size:17.00px;line-height:19px;color:#ffffff;">D</div>
<div class="t" style="left:704.33px;top:154.00px;font-size:17.00px;line-height:19px;color:#ffffff;">E</div>
<div class="t" style="left:818.81px;top:154.00px;font-size:17.00px;line-height:19px;color:#ffffff;">F</div>
<div class="t" style="left:936.89px;top:154.00px;font-size:17.00px;line-height:19px;color:#ffffff;">G</div>
<div class="t" style="left:1067.86px;top:154.00px;font-size:17.00px;line-height:19px;color:#ffffff;">H</div>
<div class="t" style="left:1180.64px;top:154.00px;font-size:17.00px;line-height:19px;color:#ffffff;">I</div>
<div class="t" style="left:1261.25px;top:154.00px;font-size:17.00px;line-height:19px;color:#ffffff;">J</div>
<div class="t" style="left:1342.83px;top:154.00px;font-size:17.00px;line-height:19px;color:#ffffff;">K</div>
<div class="t" style="left:1445.77px;top:154.00px;font-size:17.00px;line-height:19px;color:#ffffff;">L</div>
<div class="t" style="left:1552.92px;top:154.00px;font-size:17.00px;line-height:19px;color:#ffffff;">M</div>
<div style="position:absolute;left:32px;top:172px;width:1591px;height:2px;background:#1b673d"></div>
<div style="position:absolute;left:34px;top:174px;width:1589px;height:1.5px;background:#d3e8d9"></div>
<svg style="position:absolute;left:0;top:149px" width="33" height="26"><polygon points="13,22 31,4 31,22" fill="#e8e8e8"/></svg>
<div style="position:absolute;left:0px;top:174px;width:33px;height:684px;background:#606060"></div>
<div style="position:absolute;left:0px;top:174px;width:32px;height:1px;background:#8e8e8e"></div>
<div style="position:absolute;left:0px;top:198px;width:32px;height:1px;background:#8e8e8e"></div>
<div style="position:absolute;left:0px;top:223px;width:32px;height:1px;background:#8e8e8e"></div>
<div style="position:absolute;left:0px;top:248px;width:32px;height:1px;background:#8e8e8e"></div>
<div style="position:absolute;left:0px;top:273px;width:32px;height:1px;background:#8e8e8e"></div>
<div style="position:absolute;left:0px;top:298px;width:32px;height:1px;background:#8e8e8e"></div>
<div style="position:absolute;left:0px;top:323px;width:32px;height:1px;background:#8e8e8e"></div>
<div style="position:absolute;left:0px;top:348px;width:32px;height:1px;background:#8e8e8e"></div>
<div style="position:absolute;left:0px;top:373px;width:32px;height:1px;background:#8e8e8e"></div>
<div style="position:absolute;left:0px;top:398px;width:32px;height:1px;background:#8e8e8e"></div>
<div style="position:absolute;left:0px;top:422px;width:32px;height:1px;background:#8e8e8e"></div>
<div style="position:absolute;left:0px;top:447px;width:32px;height:1px;background:#8e8e8e"></div>
<div style="position:absolute;left:0px;top:472px;width:32px;height:1px;background:#8e8e8e"></div>
<div style="position:absolute;left:0px;top:497px;width:32px;height:1px;background:#8e8e8e"></div>
<div style="position:absolute;left:0px;top:522px;width:32px;height:1px;background:#8e8e8e"></div>
<div style="position:absolute;left:0px;top:547px;width:32px;height:1px;background:#8e8e8e"></div>
<div style="position:absolute;left:0px;top:572px;width:32px;height:1px;background:#8e8e8e"></div>
<div style="position:absolute;left:0px;top:597px;width:32px;height:1px;background:#8e8e8e"></div>
<div style="position:absolute;left:0px;top:622px;width:32px;height:1px;background:#8e8e8e"></div>
<div style="position:absolute;left:0px;top:647px;width:32px;height:1px;background:#8e8e8e"></div>
<div style="position:absolute;left:0px;top:672px;width:32px;height:1px;background:#8e8e8e"></div>
<div style="position:absolute;left:0px;top:697px;width:32px;height:1px;background:#8e8e8e"></div>
<div style="position:absolute;left:0px;top:721px;width:32px;height:1px;background:#8e8e8e"></div>
<div style="position:absolute;left:0px;top:746px;width:32px;height:1px;background:#8e8e8e"></div>
<div style="position:absolute;left:0px;top:771px;width:32px;height:1px;background:#8e8e8e"></div>
<div style="position:absolute;left:0px;top:796px;width:32px;height:1px;background:#8e8e8e"></div>
<div style="position:absolute;left:0px;top:821px;width:32px;height:1px;background:#8e8e8e"></div>
<div style="position:absolute;left:0px;top:846px;width:32px;height:1px;background:#8e8e8e"></div>
<div class="t" style="left:11.77px;top:178.00px;font-size:17.00px;line-height:19px;color:#ffffff;">1</div>
<div class="t" style="left:11.77px;top:203.00px;font-size:17.00px;line-height:19px;color:#ffffff;">2</div>
<div class="t" style="left:11.77px;top:228.00px;font-size:17.00px;line-height:19px;color:#ffffff;">3</div>
<div class="t" style="left:11.77px;top:253.00px;font-size:17.00px;line-height:19px;color:#ffffff;">4</div>
<div class="t" style="left:11.77px;top:278.00px;font-size:17.00px;line-height:19px;color:#ffffff;">5</div>
<div class="t" style="left:11.77px;top:303.00px;font-size:17.00px;line-height:19px;color:#ffffff;">6</div>
<div class="t" style="left:11.77px;top:328.00px;font-size:17.00px;line-height:19px;color:#ffffff;">7</div>
<div class="t" style="left:11.77px;top:353.00px;font-size:17.00px;line-height:19px;color:#ffffff;">8</div>
<div class="t" style="left:11.77px;top:378.00px;font-size:17.00px;line-height:19px;color:#ffffff;">9</div>
<div class="t" style="left:7.05px;top:403.00px;font-size:17.00px;line-height:19px;color:#ffffff;">10</div>
<div class="t" style="left:7.68px;top:427.00px;font-size:17.00px;line-height:19px;color:#ffffff;">11</div>
<div class="t" style="left:7.05px;top:452.00px;font-size:17.00px;line-height:19px;color:#ffffff;">12</div>
<div class="t" style="left:7.05px;top:477.00px;font-size:17.00px;line-height:19px;color:#ffffff;">13</div>
<div class="t" style="left:7.05px;top:502.00px;font-size:17.00px;line-height:19px;color:#ffffff;">14</div>
<div class="t" style="left:7.05px;top:527.00px;font-size:17.00px;line-height:19px;color:#ffffff;">15</div>
<div class="t" style="left:7.05px;top:552.00px;font-size:17.00px;line-height:19px;color:#ffffff;">16</div>
<div class="t" style="left:7.05px;top:577.00px;font-size:17.00px;line-height:19px;color:#ffffff;">17</div>
<div class="t" style="left:7.05px;top:602.00px;font-size:17.00px;line-height:19px;color:#ffffff;">18</div>
<div class="t" style="left:7.05px;top:627.00px;font-size:17.00px;line-height:19px;color:#ffffff;">19</div>
<div class="t" style="left:7.05px;top:652.00px;font-size:17.00px;line-height:19px;color:#ffffff;">20</div>
<div class="t" style="left:7.05px;top:677.00px;font-size:17.00px;line-height:19px;color:#ffffff;">21</div>
<div class="t" style="left:7.05px;top:702.00px;font-size:17.00px;line-height:19px;color:#ffffff;">22</div>
<div class="t" style="left:7.05px;top:726.00px;font-size:17.00px;line-height:19px;color:#ffffff;">23</div>
<div class="t" style="left:7.05px;top:751.00px;font-size:17.00px;line-height:19px;color:#ffffff;">24</div>
<div class="t" style="left:7.05px;top:776.00px;font-size:17.00px;line-height:19px;color:#ffffff;">25</div>
<div class="t" style="left:7.05px;top:801.00px;font-size:17.00px;line-height:19px;color:#ffffff;">26</div>
<div class="t" style="left:7.05px;top:826.00px;font-size:17.00px;line-height:19px;color:#ffffff;">27</div>
<div class="t" style="left:7.05px;top:851.00px;font-size:17.00px;line-height:19px;color:#ffffff;">28</div>
<div style="position:absolute;left:32px;top:172px;width:2px;height:686px;background:#1b673d"></div>
<div style="position:absolute;left:34px;top:174px;width:1.5px;height:684px;background:#d3e8d9"></div>
<div style="position:absolute;left:1623px;top:149px;width:27px;height:709px;background:#4f4f4f"></div>
<div style="position:absolute;left:1624px;top:150px;width:24px;height:710px;background:#3b3b3b;border-radius:12px"></div>
<div style="position:absolute;left:120px;top:857px;width:240px;height:10px;background:#c9c9c9"></div>
<div style="position:absolute;left:0px;top:858px;width:142.5px;height:41px;background:#505050;border-top-right-radius:7px"></div>
<div style="position:absolute;left:330px;top:858px;width:1320px;height:41px;background:#505050;border-top-left-radius:7px"></div>
<div style="position:absolute;left:1426px;top:859px;width:164px;height:1.5px;background:#9b3a48"></div>
<div style="position:absolute;left:0px;top:899px;width:1650px;height:1px;background:#3c3c3c"></div>
<div style="position:absolute;left:0px;top:900px;width:1650px;height:27px;background:#4a4a4a"></div>
<div style="position:absolute;left:0px;top:927px;width:1650px;height:1px;background:#d0d0d0"></div>
<svg style="position:absolute;left:14px;top:14px" width="34" height="34" viewBox="0 0 34 34"><rect x="9" y="6.4" width="17" height="8" rx="1.6" fill="#6cd46c"/><rect x="17.5" y="6.4" width="8.5" height="8" rx="1.2" fill="#b5ec7a"/><rect x="9" y="13.5" width="17" height="12.9" rx="1.4" fill="#237a2c"/><rect x="9" y="13.5" width="17" height="3" fill="#237a2c"/><rect x="6.2" y="13.9" width="11.4" height="11.7" rx="1.6" fill="#0d5530"/><path d="M9.9 15.6 L15.2 21.8 M15.2 15.6 L9.9 21.8" stroke="#f4fff4" stroke-width="1.9"/></svg>
<div class="t" style="left:61.30px;top:23.50px;font-size:13.30px;line-height:15px;color:#9c9c9c;transform:scaleX(0.9779);transform-origin:0 0;">AutoSave</div>
<div style="position:absolute;left:126px;top:18px;width:53px;height:22px;border:2px solid #858585;border-radius:14px"></div>
<div style="position:absolute;left:130px;top:21px;width:19px;height:19px;border-radius:50%;background:#9e9e9e"></div>
<div class="t" style="left:155.70px;top:23.50px;font-size:13.30px;line-height:15px;color:#9a9a9a;transform:scaleX(1.0575);transform-origin:0 0;">Off</div>
<svg style="position:absolute;left:195px;top:15px" width="30" height="30" viewBox="0 0 30 30" fill="none" stroke="#727272" stroke-width="1.3"><path d="M4.5 6 H22 V13.5"/><path d="M4.5 6 V22 Q4.5 24.5 7 24.5 H11"/><path d="M9.5 6.5 V12.5 H19 V6.5"/><path d="M9.5 24 V18 L12.5 15.5"/><circle cx="18.4" cy="20.5" r="5"/><path d="M15.6 19.5 a3 3 0 0 1 5.3 -1.3 M21.2 21.6 a3 3 0 0 1 -5.3 1.2"/></svg>
<svg style="position:absolute;left:228px;top:12px" width="50" height="36" viewBox="0 0 50 36" fill="none" stroke="#cccccc" stroke-width="1.4" stroke-linecap="round" stroke-linejoin="round"><path d="M9.1 8.1 V17 H17"/><path d="M10.3 16 C12.5 10.5 16 8.5 19.5 8.5 C23.5 8.5 26.5 11.5 26.5 15.5 C26.5 18 25.5 19.5 24 21 L15.5 28.5"/><path d="M35.2 16.3 L38.6 19.5 L42 16.3"/></svg>
<svg style="position:absolute;left:278px;top:12px" width="50" height="36" viewBox="0 0 50 36" fill="none" stroke="#727272" stroke-width="1.4" stroke-linecap="round" stroke-linejoin="round"><path d="M25.4 7.8 V16.7 H17"/><path d="M24.2 15.7 C21.5 10.5 18 8.5 14.5 8.5 C10.5 8.5 7.5 11.5 7.5 15.5 C7.5 18 8.5 19.5 10 21 L18.5 28.5"/><path d="M34.3 16.5 L37.5 19.5 L40.7 16.5"/></svg>
<svg style="position:absolute;left:328px;top:12px" width="30" height="30" viewBox="0 0 30 30" fill="none" stroke="#727272" stroke-width="1.3"><path d="M6 10.3 Q15.8 8.6 25.5 10.3 V26.4 H6 Z"/><circle cx="15.5" cy="19.4" r="4.2"/><circle cx="9.2" cy="14.3" r="0.7" fill="#727272"/></svg>
<svg style="position:absolute;left:372px;top:22px" width="18" height="16" viewBox="0 0 18 16" fill="none" stroke="#d2d2d2" stroke-width="1.5" stroke-linecap="round" stroke-linejoin="round"><path d="M4.2 6.3 H13.6"/><path d="M5.2 9.4 L8.6 12.5 L12 9.4"/></svg>
<div class="t" style="left:418.70px;top:22.00px;font-size:17.00px;line-height:19px;color:#c2c2c2;transform:scaleX(0.8389);transform-origin:0 0;">50000 Sales Rec...</div>
<div style="position:absolute;left:551px;top:29px;width:4px;height:4px;border-radius:50%;background:#c2c2c2"></div>
<div class="t" style="left:563.00px;top:22.00px;font-size:17.00px;line-height:19px;color:#c2c2c2;transform:scaleX(0.8841);transform-origin:0 0;">Last Modified: 7 July</div>
<svg style="position:absolute;left:705px;top:24px" width="17" height="12" viewBox="0 0 17 12" fill="none" stroke="#c2c2c2" stroke-width="1.6"><path d="M2 3 L8.5 9.5 L15 3"/></svg>
<div style="position:absolute;left:763px;top:10px;width:445px;height:41px;border-radius:5px;background:#888888;box-shadow:0 1px 1px rgba(0,0,0,0.35)"></div>
<svg style="position:absolute;left:778px;top:19px" width="24" height="24" viewBox="0 0 24 24" fill="none" stroke="#5e5e5e" stroke-width="1.6"><circle cx="14" cy="9" r="5.5"/><path d="M10 13 L3.5 19.5"/></svg>
<div class="t" style="left:816.00px;top:23.00px;font-size:17.00px;line-height:19px;color:#5f5f5f;transform:scaleX(0.9283);transform-origin:0 0;">Search</div>
<svg style="position:absolute;left:1417.5px;top:15px" width="32" height="32" viewBox="0 0 32 32"><defs><clipPath id="av"><circle cx="15.8" cy="15.7" r="15.5"/></clipPath></defs><circle cx="15.8" cy="15.7" r="15.5" fill="#a9b1c5"/><g clip-path="url(#av)"><path d="M9.3 16.5 C9 8 10 2 15.8 2 C21.5 2 22.5 8 22.3 16.5 L19.5 17 L12 17 Z" fill="#1d191b"/><ellipse cx="15.9" cy="9.6" rx="3.2" ry="4.3" fill="#8c6753"/><path d="M14.3 13 h3.2 v4 h-3.2z" fill="#7a5846"/><path d="M5 33 C5.5 22 9 17.5 15.8 17.5 C22.5 17.5 26 22 27 33 Z" fill="#eef0f3"/><path d="M9 26 C13 24 18 24 24 27" stroke="#c9c4c6" stroke-width="1.2" fill="none"/></g></svg>
<div style="position:absolute;left:1488px;top:30px;width:14px;height:1.3px;background:#cfcfcf"></div>
<svg style="position:absolute;left:1548px;top:22px" width="18" height="18" viewBox="0 0 18 18" fill="none" stroke="#cfcfcf" stroke-width="1.2"><rect x="2.5" y="5.5" width="10" height="10" rx="1.5"/><path d="M5.5 3 h7 a2.5 2.5 0 0 1 2.5 2.5 v7"/></svg>
<svg style="position:absolute;left:1610px;top:23px" width="18" height="16" viewBox="0 0 18 16" fill="none" stroke="#cfcfcf" stroke-width="1.3"><path d="M2.5 1.5 L15.5 14.5 M15.5 1.5 L2.5 14.5"/></svg>
<div class="t" style="left:27.00px;top:72.30px;font-size:17.30px;line-height:20px;color:#ffffff;transform:scaleX(0.9076);transform-origin:0 0;">File</div>
<div class="t" style="left:88.20px;top:72.30px;font-size:17.30px;line-height:20px;color:#ffffff;transform:scaleX(0.9687);transform-origin:0 0;">Home</div>
<div class="t" style="left:161.20px;top:72.30px;font-size:17.30px;line-height:20px;color:#ffffff;transform:scaleX(0.9223);transform-origin:0 0;">Insert</div>
<div class="t" style="left:228.70px;top:72.30px;font-size:17.30px;line-height:20px;color:#ffffff;transform:scaleX(0.9537);transform-origin:0 0;">Draw</div>
<div class="t" style="left:294.10px;top:72.30px;font-size:17.30px;line-height:20px;color:#ffffff;transform:scaleX(0.9326);transform-origin:0 0;">Page Layout</div>
<div class="t" style="left:413.00px;top:72.30px;font-size:17.30px;line-height:20px;color:#ffffff;transform:scaleX(0.9460);transform-origin:0 0;">Formulas</div>
<div class="t" style="left:506.00px;top:72.30px;font-size:17.30px;line-height:20px;color:#ffffff;transform:scaleX(0.9578);transform-origin:0 0;">Data</div>
<div class="t" style="left:567.30px;top:72.30px;font-size:17.30px;line-height:20px;color:#ffffff;transform:scaleX(0.9115);transform-origin:0 0;">Review</div>
<div class="t" style="left:645.00px;top:72.30px;font-size:17.30px;line-height:20px;color:#ffffff;transform:scaleX(0.9601);transform-origin:0 0;">View</div>
<div class="t" style="left:707.30px;top:72.30px;font-size:17.30px;line-height:20px;color:#ffffff;transform:scaleX(1.0089);transform-origin:0 0;">Automate</div>
<div class="t" style="left:807.70px;top:72.30px;font-size:17.30px;line-height:20px;color:#ffffff;transform:scaleX(0.9837);transform-origin:0 0;">Help</div>
<div class="t" style="left:868.30px;top:72.30px;font-size:17.30px;line-height:20px;color:#ffffff;">Acrobat</div>
<div style="position:absolute;left:1418px;top:65px;width:115px;height:31px;border-radius:5px;background:#c9c9c9"></div>
<svg style="position:absolute;left:1423px;top:72px" width="18" height="18" viewBox="0 0 18 18" fill="none" stroke="#2b2b2b" stroke-width="1.3"><path d="M2.5 2.5 h13 v9 h-8 l-3.5 3.5 v-3.5 h-1.5 z"/></svg>
<div class="t" style="left:1445.00px;top:72.00px;font-size:17.30px;line-height:20px;color:#262626;transform:scaleX(0.9685);transform-origin:0 0;">Comments</div>
<div style="position:absolute;left:1544px;top:65px;width:90px;height:31px;border-radius:5px;background:#5cbf7a"></div>
<svg style="position:absolute;left:1549px;top:71px" width="19" height="19" viewBox="0 0 19 19" fill="none" stroke="#13502a" stroke-width="1.5"><path d="M7 4 h-4.5 v12.5 h12.5 v-4"/><path d="M6 13 C6 8 9 6 13 6 h3"/><path d="M13 2.5 L16.5 6 L13 9.5"/></svg>
<div class="t" style="left:1571.50px;top:72.00px;font-size:17.30px;line-height:20px;color:#0f4a24;transform:scaleX(0.9315);transform-origin:0 0;">Share</div>
<svg style="position:absolute;left:1620px;top:76px" width="10" height="8" viewBox="0 0 10 8" fill="none" stroke="#0f4a24" stroke-width="1.5"><path d="M1.5 2 L5 5.5 L8.5 2"/></svg>
<div style="position:absolute;left:10px;top:111px;width:129px;height:28px;border:1px solid #7e7e7e;border-radius:5px"></div>
<div class="t" style="left:16.40px;top:117.60px;font-size:17.00px;line-height:19px;color:#ffffff;transform:scaleX(0.9456);transform-origin:0 0;">A13</div>
<svg style="position:absolute;left:118px;top:119px" width="17" height="12" viewBox="0 0 17 12" fill="none" stroke="#d5d5d5" stroke-width="1.6"><path d="M2 3 L8.5 9.5 L15 3"/></svg>
<div style="position:absolute;left:152px;top:118.8px;width:3.4px;height:3.4px;border-radius:1px;background:#dcdcdc"></div>
<div style="position:absolute;left:152px;top:123.9px;width:3.4px;height:3.4px;border-radius:1px;background:#dcdcdc"></div>
<div style="position:absolute;left:152px;top:129.0px;width:3.4px;height:3.4px;border-radius:1px;background:#dcdcdc"></div>
<div style="position:absolute;left:167px;top:111px;width:108px;height:28px;border:1px solid #7e7e7e;border-radius:5px"></div>
<svg style="position:absolute;left:172px;top:115px" width="22" height="22" viewBox="0 0 22 22" fill="none" stroke="#8a8a8a" stroke-width="1.3"><path d="M3.5 4 L17.5 18 M17.5 4 L3.5 18"/></svg>
<svg style="position:absolute;left:200px;top:115px" width="26" height="22" viewBox="0 0 26 22" fill="none" stroke="#8a8a8a" stroke-width="1.3"><path d="M3 10.5 L9.5 17.5 L23 4"/></svg>
<div class="t" style="left:235.5px;top:108.5px;font-family:'Liberation Serif',serif;font-style:italic;font-size:24px;line-height:30px;color:#e6e6e6;letter-spacing:0px">fx</div>
<svg style="position:absolute;left:259.5px;top:120px" width="15" height="12" viewBox="0 0 15 12" fill="none" stroke="#d5d5d5" stroke-width="1.5"><path d="M2 3 L7.5 8.5 L13 3"/></svg>
<div style="position:absolute;left:282px;top:111px;width:1356px;height:28px;border:1px solid #7e7e7e;border-radius:5px"></div>
<div class="t" style="left:296.30px;top:117.00px;font-size:16.80px;line-height:19px;color:#ffffff;">Middle East and North Africa</div>
<svg style="position:absolute;left:1618px;top:117px" width="19" height="14" viewBox="0 0 19 14" fill="none" stroke="#d5d5d5" stroke-width="1.6"><path d="M2.5 4 L9.5 10.5 L16.5 4"/></svg>
<svg style="position:absolute;left:1630px;top:155px" width="14" height="11" viewBox="0 0 14 11"><path d="M1.5 10 L7 1.5 L12.5 10 Z" fill="#dcdcdc" stroke="#dcdcdc" stroke-width="1" stroke-linejoin="round"/></svg>
<div style="position:absolute;left:1632px;top:172px;width:10.5px;height:22.5px;background:#cbcbcb;border-radius:6px"></div>
<svg style="position:absolute;left:1630px;top:844px" width="14" height="11" viewBox="0 0 14 11"><path d="M1.5 1 L7 9.5 L12.5 1 Z" fill="#dcdcdc" stroke="#dcdcdc" stroke-width="1" stroke-linejoin="round"/></svg>
<svg style="position:absolute;left:27px;top:869px" width="14" height="18" viewBox="0 0 14 18" fill="none" stroke="#9a9a9a" stroke-width="1.4"><path d="M10 2.5 L4 9 L10 15.5"/></svg>
<svg style="position:absolute;left:69px;top:869px" width="14" height="18" viewBox="0 0 14 18" fill="none" stroke="#9a9a9a" stroke-width="1.4"><path d="M4 2.5 L10 9 L4 15.5"/></svg>
<div style="position:absolute;left:142.5px;top:857px;width:187.5px;height:36px;background:#ffffff;border-radius:0 0 7px 7px"></div>
<div class="t" style="left:153.40px;top:866.20px;font-size:17.00px;line-height:19px;color:#111111;transform:scaleX(1.0207);transform-origin:0 0;">50000 Sales Records</div>
<div style="position:absolute;left:153px;top:887.5px;width:166px;height:2.5px;background:#107c41;border-radius:1px"></div>
<div style="position:absolute;left:335px;top:866px;width:1px;height:24px;background:#6a6a6a"></div>
<svg style="position:absolute;left:387px;top:868px" width="19" height="18" viewBox="0 0 19 18" fill="none" stroke="#cfcfcf" stroke-width="1.4"><path d="M9.5 1.5 V16.5 M2 9 H17"/></svg>
<div style="position:absolute;left:992.5px;top:872.0px;width:3px;height:3px;border-radius:50%;background:#d0d0d0"></div>
<div style="position:absolute;left:992.5px;top:877.5px;width:3px;height:3px;border-radius:50%;background:#d0d0d0"></div>
<div style="position:absolute;left:992.5px;top:883.0px;width:3px;height:3px;border-radius:50%;background:#d0d0d0"></div>
<div style="position:absolute;left:1014px;top:866px;width:612px;height:22px;background:#3b3b3b;border-radius:11px"></div>
<svg style="position:absolute;left:1019px;top:871px" width="12" height="14" viewBox="0 0 12 14"><path d="M10.5 1.5 L2 7 L10.5 12.5 Z" fill="#dcdcdc" stroke="#dcdcdc" stroke-linejoin="round"/></svg>
<div style="position:absolute;left:1037.5px;top:872.5px;width:512.5px;height:9.5px;background:#cbcbcb;border-radius:5px"></div>
<svg style="position:absolute;left:1609px;top:871px" width="12" height="14" viewBox="0 0 12 14"><path d="M1.5 1.5 L10 7 L1.5 12.5 Z" fill="#dcdcdc" stroke="#dcdcdc" stroke-linejoin="round"/></svg>
<div class="t" style="left:15.00px;top:906.60px;font-size:13.30px;line-height:15px;color:#d8d8d8;transform:scaleX(0.9658);transform-origin:0 0;">Enter</div>
<svg style="position:absolute;left:70px;top:900px" width="30" height="26" viewBox="0 0 30 26" fill="none" stroke="#e6e6e6" stroke-width="1.5" stroke-linecap="round" stroke-linejoin="round"><circle cx="13.7" cy="7.1" r="2.4"/><path d="M6.5 9.3 C7.2 7.6 8.6 8.4 10.5 9.6 L16.8 9.6 C18.8 8.4 20 7.6 21 9.3 C20.5 10.5 19 10.8 17.5 11.5"/><path d="M6.5 9.3 C7.5 11 9.5 11 10.3 12.5 L9.6 21.8 L14 16.8 L17.2 21.8"/><path d="M18.5 14.6 a2.6 2.6 0 1 1 3.9 2.3 c-0.9 0.5 -1.1 1.1 -1.1 2.2"/><circle cx="21.3" cy="21.9" r="0.45" fill="#e6e6e6"/></svg>
<div class="t" style="left:98.00px;top:906.60px;font-size:13.30px;line-height:15px;color:#d8d8d8;transform:scaleX(0.9899);transform-origin:0 0;">Accessibility: Unavailable</div>
<div class="t" style="left:865.00px;top:906.60px;font-size:13.30px;line-height:15px;color:#d8d8d8;">Average: 70908192.01</div>
<div class="t" style="left:1020.00px;top:906.60px;font-size:13.30px;line-height:15px;color:#d8d8d8;transform:scaleX(1.0051);transform-origin:0 0;">Count: 700014</div>
<div class="t" style="left:1128.00px;top:906.60px;font-size:13.30px;line-height:15px;color:#d8d8d8;transform:scaleX(0.9944);transform-origin:0 0;">Sum: 2.76209E+13</div>
<svg style="position:absolute;left:1281px;top:903px" width="20" height="20" viewBox="0 0 20 20" fill="none" stroke="#646464" stroke-width="1.2"><rect x="2" y="2" width="16" height="16"/><path d="M2 7.3 H18 M2 12.6 H18 M7.3 2 V18 M12.6 2 V18"/></svg>
<svg style="position:absolute;left:1333px;top:903px" width="20" height="20" viewBox="0 0 20 20" fill="none" stroke="#646464" stroke-width="1.2"><rect x="2" y="2" width="16" height="16"/><rect x="5" y="4.5" width="10" height="11"/><path d="M7 7.5 H13 M7 10 H13 M7 12.5 H13"/></svg>
<svg style="position:absolute;left:1385px;top:903px" width="20" height="20" viewBox="0 0 20 20" fill="none" stroke="#646464" stroke-width="1.2"><path d="M2 2 H18 V18 H2 Z M6 2 V9 H12 V2"/></svg>
<div style="position:absolute;left:1428px;top:912.5px;width:9px;height:1px;background:#5a5a5a"></div>
<div style="position:absolute;left:1446px;top:912px;width:127px;height:1.5px;background:#d5d5d5"></div>
<div style="position:absolute;left:1508.5px;top:907px;width:1.5px;height:10px;background:#d5d5d5"></div>
<svg style="position:absolute;left:1579px;top:906px" width="13" height="13" viewBox="0 0 13 13" fill="none" stroke="#5e5e5e" stroke-width="1.1"><path d="M6.5 1 V12 M1 6.5 H12"/></svg>
<div class="t" style="left:1607.00px;top:906.60px;font-size:13.30px;line-height:15px;color:#5c5c5c;transform:scaleX(0.9525);transform-origin:0 0;">100%</div>
<div style="position:absolute;left:688px;top:422px;width:273.5px;height:164.5px;border-radius:8px;background:#f0f0f0;box-shadow:0 0 0 1px rgba(0,0,0,0.08),0 4px 10px rgba(0,0,0,0.12),0 18px 48px rgba(0,0,0,0.34);overflow:hidden"><div style="position:absolute;left:0;top:0;right:0;height:36px;background:#eeeff3"></div></div>
<div class="t" style="left:698.80px;top:430.80px;font-size:15.30px;line-height:17px;color:#1b1b1b;transform:scaleX(0.9622);transform-origin:0 0;-webkit-text-stroke:0.05px currentColor">Create Table</div>
<div class="t" style="left:868.30px;top:430.00px;font-size:17.50px;line-height:20px;color:#1b1b1b;transform:scaleX(0.7399);transform-origin:0 0;-webkit-text-stroke:0.05px currentColor">?</div>
<svg style="position:absolute;left:923px;top:431px" width="18" height="17" viewBox="0 0 18 17" fill="none" stroke="#1b1b1b" stroke-width="1.3"><path d="M2.3 2.2 L15.7 14.8 M15.7 2.2 L2.3 14.8"/></svg>
<div class="t" style="left:697.00px;top:470.80px;font-size:13.30px;line-height:15px;color:#1f1f1f;transform:scaleX(1.0366);transform-origin:0 0;-webkit-text-stroke:0.05px currentColor">Where is the data for your table?</div>
<div style="position:absolute;left:697px;top:484px;width:10.5px;height:1px;background:#1f1f1f"></div>
<div style="position:absolute;left:696px;top:490.5px;width:255.5px;height:23px;border:1px solid #a6a6a6;background:#ffffff"></div>
<div class="t" style="left:699.90px;top:496.50px;font-size:13.80px;line-height:15px;color:#1f1f1f;transform:scaleX(0.9571);transform-origin:0 0;-webkit-text-stroke:0.05px currentColor">$A$1:$Z$50001</div>
<div style="position:absolute;left:749px;top:497px;width:1px;height:15px;background:#000"></div>
<div style="position:absolute;left:929.5px;top:491.5px;width:22px;height:22px;border-left:1px solid #e3e3e3;background:#fbfbfb;box-shadow:inset 0 -1px 0 #d4d4d4"></div>
<svg style="position:absolute;left:933px;top:495px" width="14" height="15" viewBox="0 0 14 15"><path d="M2.3 7.3 L7 1.6 L11.7 7.3 Z" fill="#151515"/><rect x="5.9" y="6.5" width="2.2" height="4.3" fill="#151515"/><rect x="2" y="12.3" width="10" height="1.3" fill="#151515"/></svg>
<div style="position:absolute;left:696.2px;top:521px;width:16.7px;height:16.7px;border-radius:3.5px;background:#0f62c6"></div>
<svg style="position:absolute;left:696.2px;top:521px" width="17" height="17" viewBox="0 0 17 17" fill="none" stroke="#ffffff" stroke-width="1.4"><path d="M4.2 8.6 L7 11.3 L12.8 5.6"/></svg>
<div class="t" style="left:722.20px;top:523.20px;font-size:13.30px;line-height:15px;color:#1f1f1f;transform:scaleX(0.9791);transform-origin:0 0;-webkit-text-stroke:0.05px currentColor">My table has headers</div>
<div style="position:absolute;left:722px;top:537px;width:12px;height:1px;background:#1f1f1f"></div>
<div style="position:absolute;left:748.2px;top:547.6px;width:91.4px;height:26.1px;border:1.5px solid #4c8fcb;border-radius:4px;background:#fdfeff"></div>
<div class="t" style="left:788.00px;top:554.80px;font-size:13.30px;line-height:15px;color:#1f1f1f;transform:scaleX(0.8847);transform-origin:0 0;-webkit-text-stroke:0.05px currentColor">OK</div>
<div style="position:absolute;left:857.9px;top:547.6px;width:92.2px;height:27.1px;border:1px solid #d2d2d2;border-bottom-color:#bdbdbd;border-radius:4px;background:#fcfcfc"></div>
<div class="t" style="left:885.80px;top:554.80px;font-size:13.30px;line-height:15px;color:#1f1f1f;transform:scaleX(0.9276);transform-origin:0 0;-webkit-text-stroke:0.05px currentColor">Cancel</div>
</body></html>
